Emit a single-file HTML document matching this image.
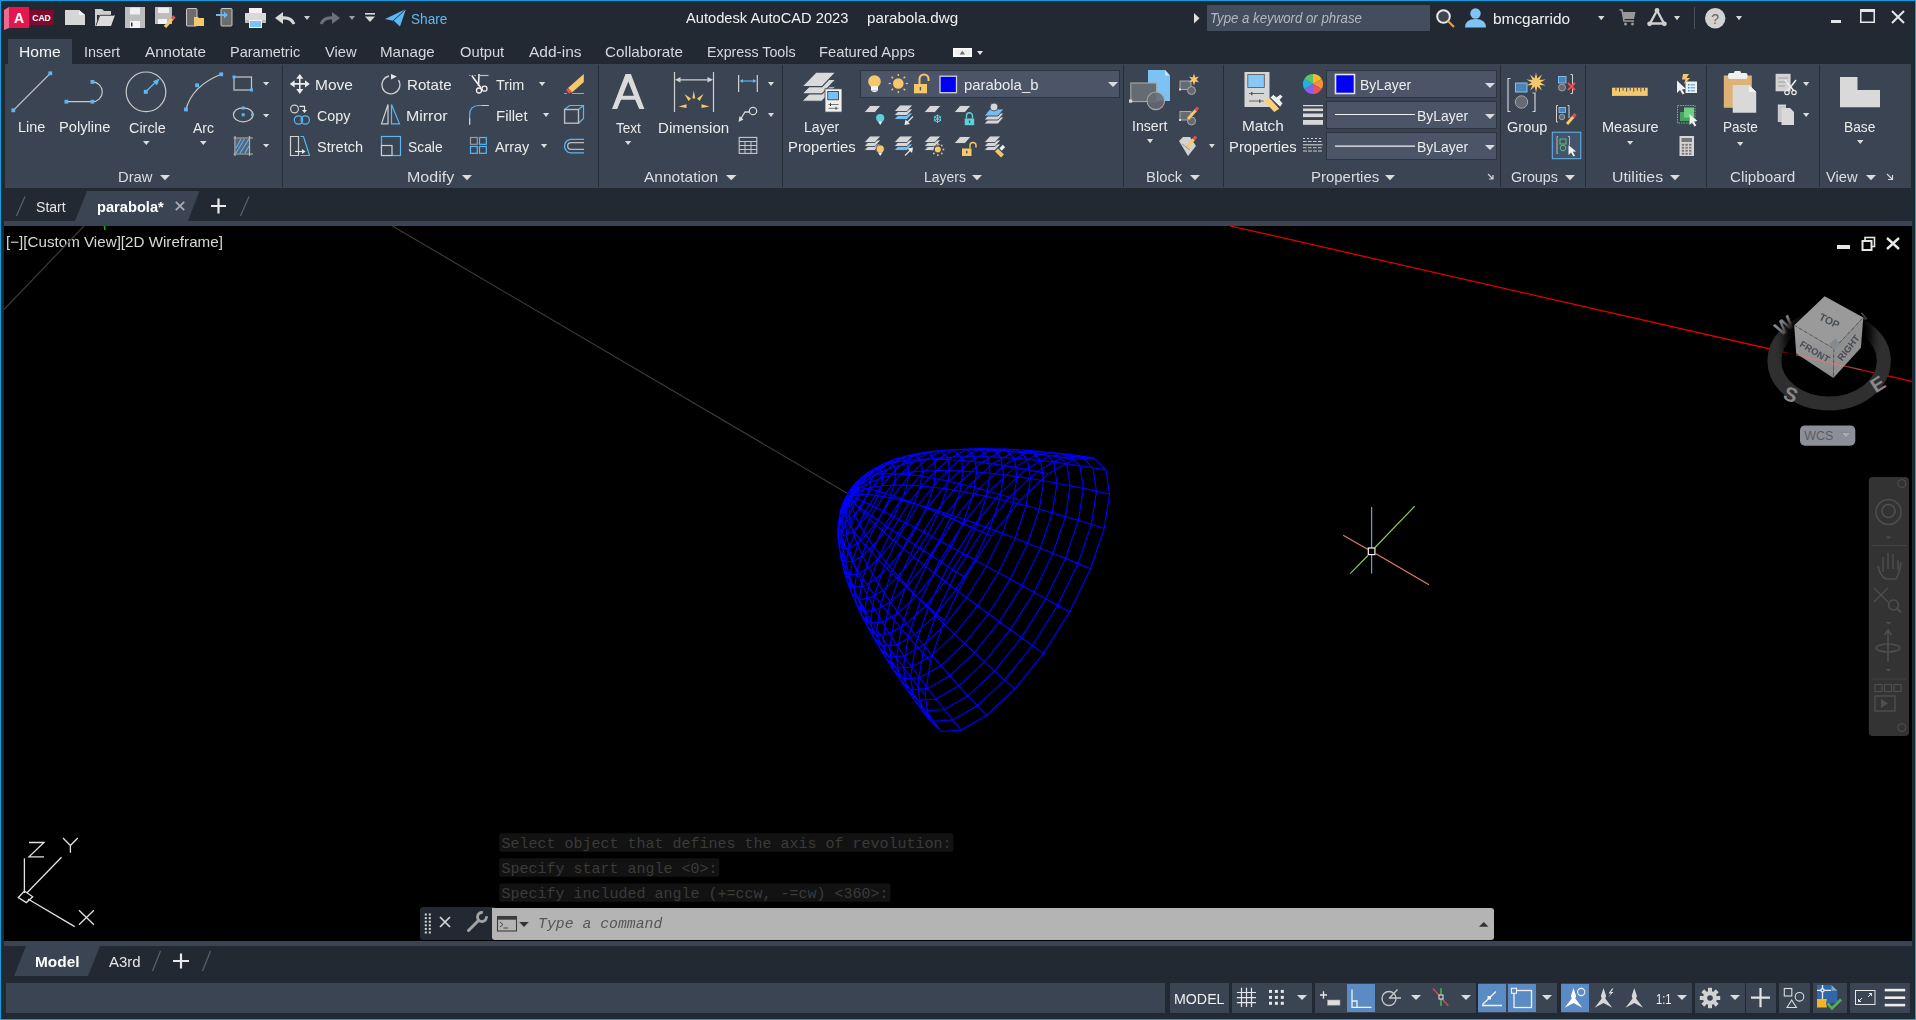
<!DOCTYPE html><html><head><meta charset="utf-8"><style>
html,body{margin:0;padding:0;width:1916px;height:1020px;overflow:hidden;background:#222933;font-family:"Liberation Sans", sans-serif;}
svg{overflow:visible}
</style></head><body>
<div style="position:absolute;left:0px;top:0px;width:1916px;height:1px;background:#0e9fe3;"></div>
<div style="position:absolute;left:0px;top:1019px;width:1916px;height:1px;background:#0e9fe3;"></div>
<div style="position:absolute;left:0px;top:0px;width:1px;height:1020px;background:#0e9fe3;"></div>
<div style="position:absolute;left:1915px;top:0px;width:1px;height:1020px;background:#0e9fe3;"></div>
<div style="position:absolute;left:8px;top:39px;width:64px;height:25px;background:#3b4453;"></div>
<div style="position:absolute;left:5px;top:64px;width:1906px;height:124px;background:#3b4453;"></div>
<div style="position:absolute;left:282px;top:65px;width:1px;height:122px;background:#262c36;"></div>
<div style="position:absolute;left:598px;top:65px;width:1px;height:122px;background:#262c36;"></div>
<div style="position:absolute;left:782px;top:65px;width:1px;height:122px;background:#262c36;"></div>
<div style="position:absolute;left:1123px;top:65px;width:1px;height:122px;background:#262c36;"></div>
<div style="position:absolute;left:1223px;top:65px;width:1px;height:122px;background:#262c36;"></div>
<div style="position:absolute;left:1500px;top:65px;width:1px;height:122px;background:#262c36;"></div>
<div style="position:absolute;left:1585px;top:65px;width:1px;height:122px;background:#262c36;"></div>
<div style="position:absolute;left:1706px;top:65px;width:1px;height:122px;background:#262c36;"></div>
<div style="position:absolute;left:1819px;top:65px;width:1px;height:122px;background:#262c36;"></div>
<svg style="position:absolute;left:70px;top:190px;" width="135" height="32" viewBox="0 0 135 32"><polygon points="17,1 129.5,1 118,31 5,31" fill="#3b4453"/></svg>
<div style="position:absolute;left:4px;top:221px;width:1908px;height:5px;background:#3b4453;"></div>
<div style="position:absolute;left:4px;top:226px;width:1908px;height:715px;background:#000;"></div>
<div style="position:absolute;left:4px;top:941px;width:1908px;height:5px;background:#3b4453;"></div>
<svg style="position:absolute;left:10px;top:946px;" width="95" height="30" viewBox="0 0 95 30"><polygon points="16,0 90,0 78,30 4,30" fill="#3b4453"/></svg>
<div style="position:absolute;left:6px;top:983px;width:1159px;height:30px;background:#3b4453;"></div>
<div style="position:absolute;left:1170px;top:983px;width:59px;height:30px;background:#3b4453;"></div>
<div style="position:absolute;left:1232px;top:983px;width:80px;height:30px;background:#3b4453;"></div>
<div style="position:absolute;left:1315px;top:983px;width:161px;height:30px;background:#3b4453;"></div>
<div style="position:absolute;left:1478px;top:983px;width:79px;height:30px;background:#3b4453;"></div>
<div style="position:absolute;left:1561px;top:983px;width:131px;height:30px;background:#3b4453;"></div>
<div style="position:absolute;left:1695px;top:983px;width:50px;height:30px;background:#3b4453;"></div>
<div style="position:absolute;left:1746px;top:983px;width:30px;height:30px;background:#3b4453;"></div>
<div style="position:absolute;left:1779px;top:983px;width:31px;height:30px;background:#3b4453;"></div>
<div style="position:absolute;left:1813px;top:983px;width:34px;height:30px;background:#3b4453;"></div>
<div style="position:absolute;left:1850px;top:983px;width:60px;height:30px;background:#3b4453;"></div>
<div style="position:absolute;left:1347px;top:984px;width:28px;height:28px;background:#5b8bc4;"></div>
<div style="position:absolute;left:1478px;top:984px;width:28px;height:28px;background:#5b8bc4;"></div>
<div style="position:absolute;left:1508px;top:984px;width:28px;height:28px;background:#5b8bc4;"></div>
<div style="position:absolute;left:1561px;top:984px;width:28px;height:28px;background:#5b8bc4;"></div>
<div style="position:absolute;left:686.40px;top:9.80px;font:normal normal 15px/15px 'Liberation Sans', sans-serif;color:#f2f2f2;white-space:pre;transform:scaleX(0.9788);transform-origin:0 0;">Autodesk AutoCAD 2023</div>
<div style="position:absolute;left:866.50px;top:9.80px;font:normal normal 15px/15px 'Liberation Sans', sans-serif;color:#f2f2f2;white-space:pre;transform:scaleX(1.0120);transform-origin:0 0;">parabola.dwg</div>
<div style="position:absolute;left:411.00px;top:11.00px;font:normal normal 15px/15px 'Liberation Sans', sans-serif;color:#62b9f0;white-space:pre;transform:scaleX(0.9072);transform-origin:0 0;">Share</div>
<div style="position:absolute;left:1207px;top:5px;width:223px;height:26px;background:#444d5d;"></div>
<div style="position:absolute;left:1209.56px;top:11.05px;font:italic normal 14px/14px 'Liberation Sans', sans-serif;color:#b4b8bf;white-space:pre;transform:scaleX(0.9442);transform-origin:0 0;">Type a keyword or phrase</div>
<div style="position:absolute;left:1492.80px;top:11.30px;font:normal normal 15px/15px 'Liberation Sans', sans-serif;color:#f2f2f2;white-space:pre;transform:scaleX(1.0270);transform-origin:0 0;">bmcgarrido</div>
<div style="position:absolute;left:18.56px;top:44.10px;font:normal normal 15px/15px 'Liberation Sans', sans-serif;color:#f6f6f6;white-space:pre;transform:scaleX(1.0447);transform-origin:0 0;">Home</div>
<div style="position:absolute;left:84.24px;top:44.10px;font:normal normal 15px/15px 'Liberation Sans', sans-serif;color:#d6d8dc;white-space:pre;transform:scaleX(0.9586);transform-origin:0 0;">Insert</div>
<div style="position:absolute;left:145.40px;top:44.10px;font:normal normal 15px/15px 'Liberation Sans', sans-serif;color:#d6d8dc;white-space:pre;transform:scaleX(1.0149);transform-origin:0 0;">Annotate</div>
<div style="position:absolute;left:230.03px;top:44.10px;font:normal normal 15px/15px 'Liberation Sans', sans-serif;color:#d6d8dc;white-space:pre;transform:scaleX(0.9678);transform-origin:0 0;">Parametric</div>
<div style="position:absolute;left:325.30px;top:44.10px;font:normal normal 15px/15px 'Liberation Sans', sans-serif;color:#d6d8dc;white-space:pre;transform:scaleX(0.9812);transform-origin:0 0;">View</div>
<div style="position:absolute;left:380.39px;top:44.10px;font:normal normal 15px/15px 'Liberation Sans', sans-serif;color:#d6d8dc;white-space:pre;transform:scaleX(1.0101);transform-origin:0 0;">Manage</div>
<div style="position:absolute;left:460.00px;top:44.10px;font:normal normal 15px/15px 'Liberation Sans', sans-serif;color:#d6d8dc;white-space:pre;transform:scaleX(0.9812);transform-origin:0 0;">Output</div>
<div style="position:absolute;left:528.90px;top:44.10px;font:normal normal 15px/15px 'Liberation Sans', sans-serif;color:#d6d8dc;white-space:pre;transform:scaleX(1.0346);transform-origin:0 0;">Add-ins</div>
<div style="position:absolute;left:604.90px;top:44.10px;font:normal normal 15px/15px 'Liberation Sans', sans-serif;color:#d6d8dc;white-space:pre;transform:scaleX(1.0174);transform-origin:0 0;">Collaborate</div>
<div style="position:absolute;left:706.65px;top:44.10px;font:normal normal 15px/15px 'Liberation Sans', sans-serif;color:#d6d8dc;white-space:pre;transform:scaleX(0.9514);transform-origin:0 0;">Express Tools</div>
<div style="position:absolute;left:818.62px;top:44.10px;font:normal normal 15px/15px 'Liberation Sans', sans-serif;color:#d6d8dc;white-space:pre;transform:scaleX(0.9836);transform-origin:0 0;">Featured Apps</div>
<div style="position:absolute;left:17.84px;top:119.30px;font:normal normal 15px/15px 'Liberation Sans', sans-serif;color:#ececec;white-space:pre;transform:scaleX(0.9624);transform-origin:0 0;">Line</div>
<div style="position:absolute;left:58.62px;top:119.30px;font:normal normal 15px/15px 'Liberation Sans', sans-serif;color:#ececec;white-space:pre;transform:scaleX(0.9788);transform-origin:0 0;">Polyline</div>
<div style="position:absolute;left:128.50px;top:119.60px;font:normal normal 15px/15px 'Liberation Sans', sans-serif;color:#ececec;white-space:pre;transform:scaleX(0.9607);transform-origin:0 0;">Circle</div>
<div style="position:absolute;left:192.50px;top:119.60px;font:normal normal 15px/15px 'Liberation Sans', sans-serif;color:#ececec;white-space:pre;transform:scaleX(0.9348);transform-origin:0 0;">Arc</div>
<div style="position:absolute;left:315.37px;top:77.00px;font:normal normal 15px/15px 'Liberation Sans', sans-serif;color:#ececec;white-space:pre;transform:scaleX(1.0329);transform-origin:0 0;">Move</div>
<div style="position:absolute;left:407.49px;top:77.00px;font:normal normal 15px/15px 'Liberation Sans', sans-serif;color:#ececec;white-space:pre;transform:scaleX(1.0081);transform-origin:0 0;">Rotate</div>
<div style="position:absolute;left:495.60px;top:77.00px;font:normal normal 15px/15px 'Liberation Sans', sans-serif;color:#ececec;white-space:pre;transform:scaleX(0.9608);transform-origin:0 0;">Trim</div>
<div style="position:absolute;left:317.00px;top:107.80px;font:normal normal 15px/15px 'Liberation Sans', sans-serif;color:#ececec;white-space:pre;transform:scaleX(0.9573);transform-origin:0 0;">Copy</div>
<div style="position:absolute;left:406.44px;top:107.80px;font:normal normal 15px/15px 'Liberation Sans', sans-serif;color:#ececec;white-space:pre;transform:scaleX(1.0613);transform-origin:0 0;">Mirror</div>
<div style="position:absolute;left:495.60px;top:107.80px;font:normal normal 15px/15px 'Liberation Sans', sans-serif;color:#ececec;white-space:pre;transform:scaleX(0.9967);transform-origin:0 0;">Fillet</div>
<div style="position:absolute;left:317.30px;top:139.00px;font:normal normal 15px/15px 'Liberation Sans', sans-serif;color:#ececec;white-space:pre;transform:scaleX(0.9687);transform-origin:0 0;">Stretch</div>
<div style="position:absolute;left:407.50px;top:139.00px;font:normal normal 15px/15px 'Liberation Sans', sans-serif;color:#ececec;white-space:pre;transform:scaleX(0.9225);transform-origin:0 0;">Scale</div>
<div style="position:absolute;left:495.30px;top:139.00px;font:normal normal 15px/15px 'Liberation Sans', sans-serif;color:#ececec;white-space:pre;transform:scaleX(0.9549);transform-origin:0 0;">Array</div>
<div style="position:absolute;left:616.40px;top:119.60px;font:normal normal 15px/15px 'Liberation Sans', sans-serif;color:#ececec;white-space:pre;transform:scaleX(0.9032);transform-origin:0 0;">Text</div>
<div style="position:absolute;left:658.00px;top:119.60px;font:normal normal 15px/15px 'Liberation Sans', sans-serif;color:#ececec;white-space:pre;transform:scaleX(1.0040);transform-origin:0 0;">Dimension</div>
<div style="position:absolute;left:803.76px;top:119.00px;font:normal normal 15px/15px 'Liberation Sans', sans-serif;color:#ececec;white-space:pre;transform:scaleX(0.9390);transform-origin:0 0;">Layer</div>
<div style="position:absolute;left:787.61px;top:139.00px;font:normal normal 15px/15px 'Liberation Sans', sans-serif;color:#ececec;white-space:pre;transform:scaleX(0.9886);transform-origin:0 0;">Properties</div>
<div style="position:absolute;left:1131.76px;top:118.30px;font:normal normal 15px/15px 'Liberation Sans', sans-serif;color:#ececec;white-space:pre;transform:scaleX(0.9425);transform-origin:0 0;">Insert</div>
<div style="position:absolute;left:1241.58px;top:118.00px;font:normal normal 15px/15px 'Liberation Sans', sans-serif;color:#ececec;white-space:pre;transform:scaleX(1.0227);transform-origin:0 0;">Match</div>
<div style="position:absolute;left:1228.71px;top:139.00px;font:normal normal 15px/15px 'Liberation Sans', sans-serif;color:#ececec;white-space:pre;transform:scaleX(0.9886);transform-origin:0 0;">Properties</div>
<div style="position:absolute;left:1506.50px;top:118.50px;font:normal normal 15px/15px 'Liberation Sans', sans-serif;color:#ececec;white-space:pre;transform:scaleX(0.9698);transform-origin:0 0;">Group</div>
<div style="position:absolute;left:1601.53px;top:119.00px;font:normal normal 15px/15px 'Liberation Sans', sans-serif;color:#ececec;white-space:pre;transform:scaleX(0.9699);transform-origin:0 0;">Measure</div>
<div style="position:absolute;left:1722.59px;top:119.00px;font:normal normal 15px/15px 'Liberation Sans', sans-serif;color:#ececec;white-space:pre;transform:scaleX(0.9050);transform-origin:0 0;">Paste</div>
<div style="position:absolute;left:1843.78px;top:119.00px;font:normal normal 15px/15px 'Liberation Sans', sans-serif;color:#ececec;white-space:pre;transform:scaleX(0.9164);transform-origin:0 0;">Base</div>
<div style="position:absolute;left:117.91px;top:169.00px;font:normal normal 15px/15px 'Liberation Sans', sans-serif;color:#dcdde0;white-space:pre;transform:scaleX(0.9862);transform-origin:0 0;">Draw</div>
<div style="position:absolute;left:407.43px;top:169.00px;font:normal normal 15px/15px 'Liberation Sans', sans-serif;color:#dcdde0;white-space:pre;transform:scaleX(1.0691);transform-origin:0 0;">Modify</div>
<div style="position:absolute;left:644.20px;top:169.00px;font:normal normal 15px/15px 'Liberation Sans', sans-serif;color:#dcdde0;white-space:pre;transform:scaleX(1.0338);transform-origin:0 0;">Annotation</div>
<div style="position:absolute;left:923.57px;top:169.00px;font:normal normal 15px/15px 'Liberation Sans', sans-serif;color:#dcdde0;white-space:pre;transform:scaleX(0.9306);transform-origin:0 0;">Layers</div>
<div style="position:absolute;left:1145.91px;top:169.00px;font:normal normal 15px/15px 'Liberation Sans', sans-serif;color:#dcdde0;white-space:pre;transform:scaleX(0.9895);transform-origin:0 0;">Block</div>
<div style="position:absolute;left:1310.60px;top:169.00px;font:normal normal 15px/15px 'Liberation Sans', sans-serif;color:#dcdde0;white-space:pre;transform:scaleX(0.9975);transform-origin:0 0;">Properties</div>
<div style="position:absolute;left:1511.40px;top:169.00px;font:normal normal 15px/15px 'Liberation Sans', sans-serif;color:#dcdde0;white-space:pre;transform:scaleX(0.9530);transform-origin:0 0;">Groups</div>
<div style="position:absolute;left:1611.64px;top:169.00px;font:normal normal 15px/15px 'Liberation Sans', sans-serif;color:#dcdde0;white-space:pre;transform:scaleX(1.0568);transform-origin:0 0;">Utilities</div>
<div style="position:absolute;left:1730.30px;top:169.00px;font:normal normal 15px/15px 'Liberation Sans', sans-serif;color:#dcdde0;white-space:pre;transform:scaleX(1.0178);transform-origin:0 0;">Clipboard</div>
<div style="position:absolute;left:1826.00px;top:169.00px;font:normal normal 15px/15px 'Liberation Sans', sans-serif;color:#dcdde0;white-space:pre;transform:scaleX(0.9812);transform-origin:0 0;">View</div>
<div style="position:absolute;left:35.50px;top:198.80px;font:normal normal 15px/15px 'Liberation Sans', sans-serif;color:#e6e6e6;white-space:pre;transform:scaleX(0.9382);transform-origin:0 0;">Start</div>
<div style="position:absolute;left:96.60px;top:199.00px;font:normal bold 15px/15px 'Liberation Sans', sans-serif;color:#ffffff;white-space:pre;transform:scaleX(0.9764);transform-origin:0 0;">parabola*</div>
<div style="position:absolute;left:6.49px;top:234.10px;font:normal normal 15px/15px 'Liberation Sans', sans-serif;color:#d8d8d8;white-space:pre;transform:scaleX(1.0117);transform-origin:0 0;">[&#8722;][Custom View][2D Wireframe]</div>
<div style="position:absolute;left:34.67px;top:954.00px;font:normal bold 15px/15px 'Liberation Sans', sans-serif;color:#ffffff;white-space:pre;transform:scaleX(1.0270);transform-origin:0 0;">Model</div>
<div style="position:absolute;left:109.00px;top:954.00px;font:normal normal 15px/15px 'Liberation Sans', sans-serif;color:#e6e6e6;white-space:pre;transform:scaleX(0.9987);transform-origin:0 0;">A3rd</div>
<div style="position:absolute;left:1173.69px;top:991.65px;font:normal normal 14px/14px 'Liberation Sans', sans-serif;color:#f0f0f0;white-space:pre;transform:scaleX(1.0143);transform-origin:0 0;">MODEL</div>
<div style="position:absolute;left:1655.60px;top:991.65px;font:normal normal 14px/14px 'Liberation Sans', sans-serif;color:#f0f0f0;white-space:pre;transform:scaleX(0.7978);transform-origin:0 0;">1:1</div>
<svg style="position:absolute;left:4px;top:7px;" width="51" height="24" viewBox="0 0 51 24"><polygon points="0,3 5,0 5,21 0,23" fill="#ea6a90"/><rect x="5" y="0" width="20" height="21" fill="#e3164f"/><rect x="25" y="3" width="25" height="15" fill="#7d0b2c"/><text x="15" y="16" font-family="Liberation Sans" font-weight="bold" font-size="14" fill="#fff" text-anchor="middle">A</text><text x="37.5" y="13.8" font-family="Liberation Sans" font-weight="bold" font-size="8.5" fill="#fff" text-anchor="middle">CAD</text></svg>
<svg style="position:absolute;left:65px;top:10px;" width="20" height="15" viewBox="0 0 20 15"><polygon points="0,0 14,0 20,5 20,15 0,15" fill="#d6d6d6"/><polygon points="14,0 20,5 14,5" fill="#f4f4f4"/></svg>
<svg style="position:absolute;left:95px;top:9px;" width="20" height="17" viewBox="0 0 20 17"><polygon points="0,0 7,0 9,2 16,2 16,6 0,6" fill="#cfcfcf"/><rect x="0" y="0" width="2" height="17" fill="#cfcfcf"/><polygon points="0.5,17 4.5,6 20,6 16,17" fill="#dcdcdc"/><path d="M1 16.5 L4.8 6.3 L19.5 6.3" stroke="#2a3038" stroke-width="0.9" fill="none"/></svg>
<svg style="position:absolute;left:125px;top:7px;" width="20" height="21" viewBox="0 0 20 21"><rect x="0" y="0" width="20" height="21" fill="#bdbdbd"/><rect x="5" y="0.5" width="10" height="7" fill="#f0f0f0"/><rect x="5" y="14" width="10" height="7" fill="#f4f4f4"/><rect x="6" y="15.5" width="1.5" height="4" fill="#333"/></svg>
<svg style="position:absolute;left:155px;top:7px;" width="20" height="21" viewBox="0 0 20 21"><rect x="0" y="0" width="17" height="17" fill="#bdbdbd"/><rect x="3" y="0.5" width="11" height="5.5" fill="#f0f0f0"/><rect x="3" y="12" width="9" height="5" fill="#f4f4f4"/><path d="M10 20 L18 11" stroke="#f6c86c" stroke-width="3.2" stroke-linecap="butt"/><path d="M17 12 L19.5 9.5" stroke="#e85555" stroke-width="3.2"/></svg>
<svg style="position:absolute;left:186px;top:8px;" width="19" height="19" viewBox="0 0 19 19"><rect x="0.5" y="0.5" width="10.5" height="17.5" rx="1" fill="#6c6c6c" stroke="#c8c8c8" stroke-width="1"/><polygon points="8,9 12,9 13,10 18,10 18,18 8,18" fill="#f6c86c"/></svg>
<svg style="position:absolute;left:216px;top:8px;" width="17" height="19" viewBox="0 0 17 19"><rect x="5" y="0.5" width="11" height="17.5" rx="1" fill="#6c6c6c" stroke="#c8c8c8" stroke-width="1"/><path d="M0 7 L9 7" stroke="#6ab8f2" stroke-width="2"/><polygon points="8,3.5 12,7 8,10.5" fill="#6ab8f2"/></svg>
<svg style="position:absolute;left:245px;top:8px;" width="21" height="20" viewBox="0 0 21 20"><rect x="4" y="0" width="13" height="6" fill="#f2f2f2"/><rect x="0" y="5" width="21" height="10" fill="#d9d9d9"/><rect x="0" y="12" width="21" height="3" fill="#bcbcbc"/><rect x="4" y="12" width="13" height="8" fill="#f2f2f2"/><rect x="5" y="13" width="11" height="6" fill="#7cc2f5"/></svg>
<svg style="position:absolute;left:275px;top:12px;" width="20" height="13" viewBox="0 0 20 13"><path d="M7 6 Q16 5 19 12" stroke="#d8d8d8" stroke-width="3" fill="none"/><polygon points="0,6 8,0 8,12" fill="#d8d8d8"/></svg>
<svg style="position:absolute;left:304px;top:16px;" width="6" height="4" viewBox="0 0 6 4"><polygon points="0,0 6,0 3.0,4" fill="#cfcfcf"/></svg>
<svg style="position:absolute;left:320px;top:12px;" width="20" height="13" viewBox="0 0 20 13"><path d="M13 6 Q4 5 1 12" stroke="#6b7079" stroke-width="3" fill="none"/><polygon points="20,6 12,0 12,12" fill="#6b7079"/></svg>
<svg style="position:absolute;left:348.5px;top:16px;" width="6" height="4" viewBox="0 0 6 4"><polygon points="0,0 6,0 3.0,4" fill="#9a9da3"/></svg>
<svg style="position:absolute;left:365px;top:13px;" width="10" height="9" viewBox="0 0 10 9"><rect x="0" y="0" width="10" height="1.6" fill="#d8d8d8"/><polygon points="0,3.5 10,3.5 5,9" fill="#d8d8d8"/></svg>
<svg style="position:absolute;left:385px;top:8.5px;" width="21" height="18" viewBox="0 0 21 18"><polygon points="0,10 21,0 15,17.5 9,12" fill="#5bb8f0"/><path d="M21 0 L8 12 L9.5 17" stroke="#2a3340" stroke-width="1" fill="none"/></svg>
<svg style="position:absolute;left:1194px;top:13px;" width="6" height="11" viewBox="0 0 6 11"><polygon points="0,0 5.5,5.2 0,10.5" fill="#e0e0e0"/></svg>
<svg style="position:absolute;left:1436px;top:9px;" width="19" height="19" viewBox="0 0 19 19"><circle cx="7.5" cy="7.5" r="6.3" fill="#3e4652" stroke="#e8e8e8" stroke-width="2"/><path d="M12 12 L18 18" stroke="#e39b4a" stroke-width="2.2"/></svg>
<svg style="position:absolute;left:1465px;top:8px;" width="21" height="20" viewBox="0 0 21 20"><circle cx="10.5" cy="5.5" r="5.2" fill="#7ec4f5"/><path d="M0 19.5 Q0 11 10.5 11 Q21 11 21 19.5 Z" fill="#7ec4f5"/></svg>
<svg style="position:absolute;left:1598px;top:15.7px;" width="6.5" height="4.3" viewBox="0 0 6.5 4.3"><polygon points="0,0 6.5,0 3.25,4.3" fill="#d8d8d8"/></svg>
<svg style="position:absolute;left:1619px;top:9px;" width="17" height="17" viewBox="0 0 17 17"><path d="M0.5 1 L3 1 L5 12 L15 12" stroke="#999" stroke-width="1.6" fill="none"/><polygon points="3.5,3 16.5,3 15,10 5,10" fill="#999"/><circle cx="6.5" cy="15" r="1.5" fill="#999"/><circle cx="13.5" cy="15" r="1.5" fill="#999"/></svg>
<svg style="position:absolute;left:1647px;top:8px;" width="20" height="19" viewBox="0 0 20 19"><path d="M10 2.5 L3 15.5 L17 15.5 Z" stroke="#cfcfcf" stroke-width="2.4" fill="none" stroke-linejoin="round"/><circle cx="10" cy="2.5" r="2.4" fill="#cfcfcf"/><circle cx="2.6" cy="15.8" r="2.4" fill="#cfcfcf"/><circle cx="17.4" cy="15.8" r="2.4" fill="#cfcfcf"/></svg>
<svg style="position:absolute;left:1674.4px;top:15.7px;" width="6" height="4.3" viewBox="0 0 6 4.3"><polygon points="0,0 6,0 3.0,4.3" fill="#d8d8d8"/></svg>
<div style="position:absolute;left:1694px;top:7px;width:1px;height:22px;background:#485160;"></div>
<svg style="position:absolute;left:1705px;top:8px;" width="21" height="21" viewBox="0 0 21 21"><circle cx="10.2" cy="10.2" r="10.2" fill="#d2d2d2"/><text x="10.2" y="15.5" font-family="Liberation Sans" font-size="14" fill="#666" text-anchor="middle">?</text></svg>
<svg style="position:absolute;left:1735.5px;top:15.7px;" width="6" height="4.3" viewBox="0 0 6 4.3"><polygon points="0,0 6,0 3.0,4.3" fill="#d8d8d8"/></svg>
<div style="position:absolute;left:1831px;top:20px;width:10px;height:3px;background:#e6e6e6;"></div>
<svg style="position:absolute;left:1860px;top:9px;" width="15" height="14" viewBox="0 0 15 14"><rect x="0.75" y="0.75" width="13.5" height="12.5" fill="none" stroke="#e6e6e6" stroke-width="1.5"/><rect x="0" y="0" width="15" height="3" fill="#e6e6e6"/></svg>
<svg style="position:absolute;left:1891px;top:10px;" width="14" height="14" viewBox="0 0 14 14"><path d="M1 1 L13 13 M13 1 L1 13" stroke="#e6e6e6" stroke-width="2"/></svg>
<svg style="position:absolute;left:953px;top:48px;" width="19" height="9" viewBox="0 0 19 9"><rect width="19" height="9" fill="#fdfdfd"/><rect x="1.5" y="1.5" width="16" height="6" fill="#efefef"/><polygon points="6.7,6.6 12,6.6 9.35,2.8" fill="#6a6a6a"/></svg>
<svg style="position:absolute;left:977px;top:51px;" width="6" height="4" viewBox="0 0 6 4"><polygon points="0,0 6,0 3.0,4" fill="#e6e6e6"/></svg>
<svg style="position:absolute;left:14px;top:195px;" width="14" height="22" viewBox="0 0 14 22"><path d="M2.5 21 L11 1.5" stroke="#5a6270" stroke-width="1.2"/></svg>
<svg style="position:absolute;left:238px;top:195px;" width="14" height="22" viewBox="0 0 14 22"><path d="M2.5 21 L11 1.5" stroke="#5a6270" stroke-width="1.2"/></svg>
<svg style="position:absolute;left:175px;top:201px;" width="10" height="10" viewBox="0 0 10 10"><path d="M0.8 0.8 L9.2 9.2 M9.2 0.8 L0.8 9.2" stroke="#a9adb4" stroke-width="1.8"/></svg>
<svg style="position:absolute;left:211px;top:198px;" width="16" height="16" viewBox="0 0 16 16"><path d="M0 8 L15 8 M7.5 0.5 L7.5 15.5" stroke="#eaeaea" stroke-width="2.2"/></svg>
<svg style="position:absolute;left:150px;top:950px;" width="14" height="22" viewBox="0 0 14 22"><path d="M2.5 21 L10.5 1" stroke="#5a6270" stroke-width="1.2"/></svg>
<svg style="position:absolute;left:200px;top:950px;" width="14" height="22" viewBox="0 0 14 22"><path d="M2.5 21 L10.5 1" stroke="#5a6270" stroke-width="1.2"/></svg>
<svg style="position:absolute;left:173px;top:953px;" width="16" height="16" viewBox="0 0 16 16"><path d="M0 8 L16 8 M8 0.5 L8 15.5" stroke="#eaeaea" stroke-width="2.2"/></svg>
<svg style="position:absolute;left:0px;top:64px;" width="300" height="124" viewBox="0 0 300 124"><path d="M13.3 46.3 L50.3 9.3" stroke="#c8c8c8" stroke-width="1.2"/><rect x="11.40" y="44.40" width="3.8" height="3.8" fill="#5cb6f2"/><rect x="48.40" y="7.40" width="3.8" height="3.8" fill="#5cb6f2"/><path d="M66.4 37.7 L92.4 37.7 M92.4 17.9 A9.9 9.9 0 0 1 92.4 37.7" stroke="#c8c8c8" stroke-width="1.2" fill="none"/><rect x="64.50" y="35.80" width="3.8" height="3.8" fill="#5cb6f2"/><rect x="90.50" y="35.80" width="3.8" height="3.8" fill="#5cb6f2"/><rect x="90.50" y="16.00" width="3.8" height="3.8" fill="#5cb6f2"/><circle cx="146" cy="27.8" r="19.8" stroke="#c8c8c8" stroke-width="1.2" fill="none"/><path d="M145.8 27.8 L157.5 16.3" stroke="#5cb6f2" stroke-width="1.3"/><polygon points="159.6,14.6 152.8,17.2 157,21.4" fill="#5cb6f2"/><rect x="143.80" y="25.80" width="4" height="4" fill="#5cb6f2"/><path d="M186 45.5 Q192 22 221.2 10.3" stroke="#c8c8c8" stroke-width="1.2" fill="none"/><rect x="184.10" y="43.60" width="3.8" height="3.8" fill="#5cb6f2"/><rect x="195.20" y="19.40" width="3.8" height="3.8" fill="#5cb6f2"/><rect x="219.30" y="8.40" width="3.8" height="3.8" fill="#5cb6f2"/><rect x="234" y="13" width="17.5" height="13" stroke="#c8c8c8" stroke-width="1.2" fill="none"/><rect x="232.50" y="11.50" width="3" height="3" fill="#5cb6f2"/><rect x="250.00" y="24.50" width="3" height="3" fill="#5cb6f2"/><ellipse cx="243.2" cy="50.8" rx="9.8" ry="7" stroke="#c8c8c8" stroke-width="1.2" fill="none"/><rect x="241.70" y="49.30" width="3" height="3" fill="#5cb6f2"/><rect x="241.70" y="42.50" width="3" height="3" fill="#5cb6f2"/><rect x="251.00" y="49.30" width="3" height="3" fill="#5cb6f2"/><path d="M235 72 L235 92 M249.5 72 L249.5 92 M233.5 74 L253 74 M233.5 90 L253 90" stroke="#b8b8b8" stroke-width="1.2"/><rect x="236" y="75" width="13" height="14" fill="#5a6472"/><path d="M236 84 L241 75 M236 89 L244.5 75 M240 89 L249 75 M245 89 L249 82" stroke="#5cb6f2" stroke-width="1.1"/></svg>
<svg style="position:absolute;left:263.2px;top:82.3px;" width="6.2" height="3.6" viewBox="0 0 6.2 3.6"><polygon points="0,0 6.2,0 3.1,3.6" fill="#dcdcdc"/></svg>
<svg style="position:absolute;left:263.2px;top:113.5px;" width="6.2" height="3.6" viewBox="0 0 6.2 3.6"><polygon points="0,0 6.2,0 3.1,3.6" fill="#dcdcdc"/></svg>
<svg style="position:absolute;left:263.2px;top:144.3px;" width="6.2" height="3.6" viewBox="0 0 6.2 3.6"><polygon points="0,0 6.2,0 3.1,3.6" fill="#dcdcdc"/></svg>
<svg style="position:absolute;left:142.7px;top:141px;" width="6.6" height="4" viewBox="0 0 6.6 4"><polygon points="0,0 6.6,0 3.3,4" fill="#dcdcdc"/></svg>
<svg style="position:absolute;left:200.0px;top:141px;" width="6.6" height="4" viewBox="0 0 6.6 4"><polygon points="0,0 6.6,0 3.3,4" fill="#dcdcdc"/></svg>
<svg style="position:absolute;left:160px;top:175px;" width="10" height="5.2" viewBox="0 0 10 5.2"><polygon points="0,0 10,0 5.0,5.2" fill="#dcdcdc"/></svg>
<svg style="position:absolute;left:0px;top:0px;" width="600" height="190" viewBox="0 0 600 190"><path d="M293.8 83.9 L305.8 83.9 M299.8 77.9 L299.8 89.9" stroke="#ececec" stroke-width="1.6"/><polygon points="289.8,83.9 294.6,80.30000000000001 294.6,87.5" fill="#ececec"/><polygon points="309.8,83.9 305.0,80.30000000000001 305.0,87.5" fill="#ececec"/><polygon points="299.8,73.9 296.2,78.7 303.40000000000003,78.7" fill="#ececec"/><polygon points="299.8,93.9 296.2,89.10000000000001 303.40000000000003,89.10000000000001" fill="#ececec"/><path d="M389 76 A9 9 0 1 0 398.5 80" stroke="#d0d0d0" stroke-width="1.3" fill="none"/><polygon points="391,74 396.8,76.6 391,79.5" fill="#e8e8e8"/><circle cx="294.5" cy="109" r="3.9" stroke="#d0d0d0" stroke-width="1.2" fill="none"/><path d="M299.5 106.3 L304.5 106.3 L304.5 111" stroke="#e8e8e8" stroke-width="1.2" fill="none"/><polygon points="302,110 307,110 304.5,113" fill="#e8e8e8"/><circle cx="298.5" cy="120" r="4.2" stroke="#5cb6f2" stroke-width="1.2" fill="none"/><circle cx="305.2" cy="120" r="4.2" stroke="#5cb6f2" stroke-width="1.2" fill="none"/><path d="M388 104.5 L388 123.8 L381.5 123.8 Z" stroke="#d0d0d0" stroke-width="1.2" fill="none"/><path d="M391.5 104.5 L391.5 123.8 L399.5 123.8 Z" stroke="#5cb6f2" stroke-width="1.2" fill="none"/><path d="M290.5 136.5 L298.5 136.5 L298.5 155.5 L290.5 155.5 Z" stroke="#d0d0d0" stroke-width="1.2" fill="none"/><path d="M300.5 136.5 L303.5 136.5 L309.5 155.5 L300.5 155.5" stroke="#5cb6f2" stroke-width="1.2" fill="none"/><path d="M295 151.5 L303 151.5" stroke="#e8e8e8" stroke-width="1.2"/><polygon points="302,149 305.5,151.5 302,154" fill="#e8e8e8"/><rect x="381.5" y="136.5" width="19" height="19" stroke="#5cb6f2" stroke-width="1.2" fill="none"/><rect x="381.5" y="145.5" width="10.5" height="10" stroke="#d0d0d0" stroke-width="1.2" fill="#3b4453"/><path d="M469 75.5 L476 75.5" stroke="#5cb6f2" stroke-width="1.2" stroke-dasharray="1.6 1"/><path d="M480 75.5 L488.5 75.5" stroke="#c0c0c0" stroke-width="1.2"/><path d="M472 76 L481 88 M479 74 L478.5 86" stroke="#f0f0f0" stroke-width="1.6"/><circle cx="479" cy="90.5" r="2.5" stroke="#f0f0f0" stroke-width="1.3" fill="none"/><circle cx="484.5" cy="88.7" r="2.5" stroke="#f0f0f0" stroke-width="1.3" fill="none"/><polygon points="568,88 583.8,74 583.8,82 572,92.5" fill="#f6c86c"/><polygon points="568,88 572,92.5 569,93.5 566,90" fill="#e85050"/><path d="M564 93.5 L567 93.5 M572 93.5 L584 93.5" stroke="#5cb6f2" stroke-width="1.2"/><path d="M469.6 124.8 L469.6 115 Q469.6 105.5 479 105.5 L488.5 105.5" stroke="#5cb6f2" stroke-width="1.2" fill="none"/><path d="M469.6 118 L469.6 124.8 M482 105.5 L488.8 105.5" stroke="#d0d0d0" stroke-width="1.2"/><path d="M564.6 109.5 L569.5 105.5 L583.5 105.5 L583.5 118.5 L578.5 123.2 M578.5 109.5 L583.5 105.5" stroke="#5cb6f2" stroke-width="1.2" fill="none"/><rect x="564.6" y="109.5" width="13.9" height="13.7" stroke="#bdbdbd" stroke-width="1.4" fill="none"/><rect x="470.5" y="137.5" width="6.8" height="6.8" stroke="#9a9a9a" stroke-width="1.2" fill="none"/><rect x="479.5" y="137.5" width="6.8" height="6.8" stroke="#5cb6f2" stroke-width="1.2" fill="none"/><rect x="470.5" y="146.5" width="6.8" height="6.8" stroke="#5cb6f2" stroke-width="1.2" fill="none"/><rect x="479.5" y="146.5" width="6.8" height="6.8" stroke="#5cb6f2" stroke-width="1.2" fill="none"/><path d="M584 139.3 L570.5 139.3 A6.8 6.8 0 0 0 570.5 152.8 L584 152.8" stroke="#5cb6f2" stroke-width="1.3" fill="none"/><path d="M584 142.7 L571 142.7 A3.3 3.3 0 0 0 571 149.3 L584 149.3" stroke="#bdbdbd" stroke-width="1.3" fill="none"/></svg>
<svg style="position:absolute;left:538.8px;top:82px;" width="6.2" height="4" viewBox="0 0 6.2 4"><polygon points="0,0 6.2,0 3.1,4" fill="#dcdcdc"/></svg>
<svg style="position:absolute;left:543.2px;top:113px;" width="6.2" height="4" viewBox="0 0 6.2 4"><polygon points="0,0 6.2,0 3.1,4" fill="#dcdcdc"/></svg>
<svg style="position:absolute;left:541px;top:144px;" width="6.2" height="4" viewBox="0 0 6.2 4"><polygon points="0,0 6.2,0 3.1,4" fill="#dcdcdc"/></svg>
<svg style="position:absolute;left:462.2px;top:175px;" width="10" height="5.2" viewBox="0 0 10 5.2"><polygon points="0,0 10,0 5.0,5.2" fill="#dcdcdc"/></svg>
<svg style="position:absolute;left:0px;top:0px;" width="800" height="190" viewBox="0 0 800 190"><path d="M612 109 L625.5 73.9 L630.9 73.9 L644.4 109 L639.2 109 L635.2 99.8 L621 99.8 L617.2 109 Z M622.6 95.7 L633.9 95.7 L628.3 81.5 Z" fill="#dadada" fill-rule="evenodd"/><path d="M674.5 72 L674.5 112 M713.5 72 L713.5 112 M678 79.8 L710 79.8" stroke="#d0d0d0" stroke-width="1.2"/><polygon points="675,79.8 680.5,77 680.5,82.6" fill="#d0d0d0"/><polygon points="713,79.8 707.5,77 707.5,82.6" fill="#d0d0d0"/><polygon points="692.3,98.5 693.8,90.5 695.3,98.5" fill="#f6c86c"/><polygon points="684.5,94 691,98.5 688.5,101" fill="#f6c86c"/><polygon points="703.5,94 697,98.5 699.5,101" fill="#f6c86c"/><polygon points="678.5,106.5 686.5,104.3 686.5,108" fill="#f6c86c"/><polygon points="709.5,106.5 701.5,104.3 701.5,108" fill="#f6c86c"/><path d="M738.6 75 L738.6 92 M757.3 75 L757.3 92" stroke="#d0d0d0" stroke-width="1.2"/><path d="M741 81 L755 81" stroke="#5cb6f2" stroke-width="1.2"/><polygon points="739.5,81 743,79 743,83" fill="#5cb6f2"/><polygon points="756.5,81 753,79 753,83" fill="#5cb6f2"/><circle cx="753" cy="111" r="3.7" stroke="#d8d8d8" stroke-width="1.2" fill="none"/><path d="M749.5 112 L745 112 L740 120" stroke="#d8d8d8" stroke-width="1.3" fill="none"/><polygon points="738.5,122 739.5,116 743.5,119.5" fill="#d8d8d8"/><rect x="739.2" y="137.4" width="17.6" height="16" stroke="#c8c8c8" stroke-width="1.1" fill="none"/><path d="M739.2 141.5 L756.8 141.5 M739.2 145.5 L756.8 145.5 M739.2 149.5 L756.8 149.5 M745 141.5 L745 153.4 M751 141.5 L751 153.4" stroke="#c8c8c8" stroke-width="1"/></svg>
<svg style="position:absolute;left:625px;top:141px;" width="6.2" height="4" viewBox="0 0 6.2 4"><polygon points="0,0 6.2,0 3.1,4" fill="#dcdcdc"/></svg>
<svg style="position:absolute;left:768px;top:82px;" width="6" height="4" viewBox="0 0 6 4"><polygon points="0,0 6,0 3.0,4" fill="#dcdcdc"/></svg>
<svg style="position:absolute;left:768px;top:113px;" width="6" height="4" viewBox="0 0 6 4"><polygon points="0,0 6,0 3.0,4" fill="#dcdcdc"/></svg>
<svg style="position:absolute;left:725.7px;top:175px;" width="10.5" height="5.2" viewBox="0 0 10.5 5.2"><polygon points="0,0 10.5,0 5.25,5.2" fill="#dcdcdc"/></svg>
<svg style="position:absolute;left:0px;top:0px;" width="1130" height="190" viewBox="0 0 1130 190"><polygon points="801.9,101.19999999999999 816.1,86.69999999999999 835.9,86.69999999999999 822,101.19999999999999" fill="#dadada" stroke="#3b4453" stroke-width="1.1"/><polygon points="801.9,93.89999999999999 816.1,79.39999999999999 835.9,79.39999999999999 822,93.89999999999999" fill="#dadada" stroke="#3b4453" stroke-width="1.1"/><polygon points="801.9,86.6 816.1,72.1 835.9,72.1 822,86.6" fill="#dadada" stroke="#3b4453" stroke-width="1.1"/><rect x="825" y="88.8" width="17" height="23.3" fill="#f0f0f0" stroke="#3b4453" stroke-width="0.8"/><rect x="827.8" y="91.4" width="10.8" height="8.4" fill="#76c2f7" stroke="#333" stroke-width="0.8"/><path d="M828.5 104.5 L838.5 104.5 M828.5 108.3 L838.5 108.3" stroke="#666" stroke-width="0.9"/><rect x="830" y="103" width="1" height="3" fill="#444"/><rect x="835.5" y="106.8" width="1" height="3" fill="#444"/><rect x="860.5" y="70.5" width="259" height="27" fill="#4b5567" stroke="#2d3440" stroke-width="1"/><circle cx="874.5" cy="81.5" r="6.3" fill="#f6c86c"/><rect x="871" y="86" width="7" height="4.5" fill="#f2f2f2"/><path d="M871 90.5 Q874.5 94 878 90.5" fill="#f2f2f2"/><circle cx="898.3" cy="83.5" r="5.3" fill="#f6c86c"/><path d="M905.80 83.50 L907.90 83.50" stroke="#f6c86c" stroke-width="1.3"/><path d="M903.60 88.80 L905.09 90.29" stroke="#f6c86c" stroke-width="1.3"/><path d="M898.30 91.00 L898.30 93.10" stroke="#f6c86c" stroke-width="1.3"/><path d="M893.00 88.80 L891.51 90.29" stroke="#f6c86c" stroke-width="1.3"/><path d="M890.80 83.50 L888.70 83.50" stroke="#f6c86c" stroke-width="1.3"/><path d="M893.00 78.20 L891.51 76.71" stroke="#f6c86c" stroke-width="1.3"/><path d="M898.30 76.00 L898.30 73.90" stroke="#f6c86c" stroke-width="1.3"/><path d="M903.60 78.20 L905.09 76.71" stroke="#f6c86c" stroke-width="1.3"/><rect x="914" y="84" width="13" height="9.3" fill="#f6c86c"/><path d="M919.5 84 L919.5 79 A4.5 4.5 0 0 1 928.5 79 L928.5 81" stroke="#f6c86c" stroke-width="2" fill="none"/><rect x="919.7" y="87" width="1.4" height="3.5" fill="#4b5567"/><rect x="940" y="76.2" width="16.5" height="16.5" fill="#0000f5" stroke="#cfd3da" stroke-width="1.3"/><polygon points="864,112.5 870,105.5 881,105.5 875,112.5" fill="#d6d6d6" stroke="#3b4453" stroke-width="0.9"/><circle cx="880.2" cy="118" r="4.1" fill="#5fd0d9"/><polygon points="878,121.5 882.5,121.5 880.2,125" fill="#f0f0f0"/><polygon points="894,119.5 900,113 913,113 907,119.5" fill="#74bdf5" stroke="#3b4453" stroke-width="0.9"/><polygon points="894,115.5 900,109 913,109 907,115.5" fill="#d6d6d6" stroke="#3b4453" stroke-width="0.9"/><polygon points="894,111.5 900,105 913,105 907,111.5" fill="#d6d6d6" stroke="#3b4453" stroke-width="0.9"/><path d="M913 116.5 L906 123.5" stroke="#e8e8e8" stroke-width="1.1"/><polygon points="904.5,125 905.5,119.5 910,124" fill="#e8e8e8"/><polygon points="924,112.5 930,105.5 941,105.5 935,112.5" fill="#d6d6d6" stroke="#3b4453" stroke-width="0.9"/><g stroke="#5fd0d9" stroke-width="1" fill="none"><path d="M937.5 114.5 L937.5 123 M933.8 116.6 L941.2 120.9 M933.8 120.9 L941.2 116.6"/><circle cx="937.5" cy="118.7" r="3.2"/></g><polygon points="954,112.5 960,105.5 971,105.5 965,112.5" fill="#d6d6d6" stroke="#3b4453" stroke-width="0.9"/><rect x="964.7" y="118.5" width="9.5" height="6.7" fill="#5fd0d9"/><path d="M966.5 118.5 L966.5 115.8 A3 3 0 0 1 972.5 115.8 L972.5 118.5" stroke="#5fd0d9" stroke-width="1.4" fill="none"/><rect x="968.9" y="120.5" width="1.2" height="2.6" fill="#3b4453"/><polygon points="984,124 990,117 1004,117 998,124" fill="#d6d6d6" stroke="#3b4453" stroke-width="0.9"/><polygon points="984,120 990,113 1004,113 998,120" fill="#d6d6d6" stroke="#3b4453" stroke-width="0.9"/><polygon points="984,116 990,109 1004,109 998,116" fill="#74bdf5" stroke="#3b4453" stroke-width="0.9"/><circle cx="994" cy="107" r="4" fill="#d6d6d6" stroke="#3b4453" stroke-width="0.8"/><polygon points="864,150.5 870,144 881,144 875,150.5" fill="#d6d6d6" stroke="#3b4453" stroke-width="0.9"/><polygon points="864,146.5 870,140 881,140 875,146.5" fill="#d6d6d6" stroke="#3b4453" stroke-width="0.9"/><polygon points="864,142.5 870,136 881,136 875,142.5" fill="#d6d6d6" stroke="#3b4453" stroke-width="0.9"/><circle cx="880.2" cy="149" r="4.1" fill="#f6c86c" stroke="#3b4453" stroke-width="0.8"/><polygon points="878,152.5 882.5,152.5 880.2,156" fill="#f0f0f0"/><polygon points="894,150.5 900,144 913,144 907,150.5" fill="#74bdf5" stroke="#3b4453" stroke-width="0.9"/><polygon points="894,146.5 900,140 913,140 907,146.5" fill="#d6d6d6" stroke="#3b4453" stroke-width="0.9"/><polygon points="894,142.5 900,136 913,136 907,142.5" fill="#d6d6d6" stroke="#3b4453" stroke-width="0.9"/><path d="M905 155.5 L911.5 149" stroke="#e8e8e8" stroke-width="1.1"/><polygon points="913,147.5 907.5,148.5 912,153" fill="#e8e8e8"/><polygon points="924,150.5 930,144 941,144 935,150.5" fill="#d6d6d6" stroke="#3b4453" stroke-width="0.9"/><polygon points="924,146.5 930,140 941,140 935,146.5" fill="#d6d6d6" stroke="#3b4453" stroke-width="0.9"/><polygon points="924,142.5 930,136 941,136 935,142.5" fill="#d6d6d6" stroke="#3b4453" stroke-width="0.9"/><circle cx="937.8" cy="149.5" r="3.6" fill="#f6c86c" stroke="#3b4453" stroke-width="1.2"/><rect x="942.60" y="148.70" width="1.6" height="1.6" fill="#f6c86c"/><rect x="940.96" y="152.66" width="1.6" height="1.6" fill="#f6c86c"/><rect x="937.00" y="154.30" width="1.6" height="1.6" fill="#f6c86c"/><rect x="933.04" y="152.66" width="1.6" height="1.6" fill="#f6c86c"/><rect x="931.40" y="148.70" width="1.6" height="1.6" fill="#f6c86c"/><rect x="933.04" y="144.74" width="1.6" height="1.6" fill="#f6c86c"/><rect x="937.00" y="143.10" width="1.6" height="1.6" fill="#f6c86c"/><rect x="940.96" y="144.74" width="1.6" height="1.6" fill="#f6c86c"/><polygon points="954,143.5 960,136.5 971,136.5 965,143.5" fill="#d6d6d6" stroke="#3b4453" stroke-width="0.9"/><rect x="962" y="148.5" width="9.5" height="7.5" fill="#f6c86c"/><path d="M970 148.5 L970 145.5 A3 3 0 0 1 976 145.5 L976 147.5" stroke="#f6c86c" stroke-width="1.4" fill="none"/><rect x="966.2" y="150.8" width="1.2" height="2.6" fill="#3b4453"/><polygon points="984,150.5 990,144 1001,144 995,150.5" fill="#d6d6d6" stroke="#3b4453" stroke-width="0.9"/><polygon points="984,146.5 990,140 1001,140 995,146.5" fill="#d6d6d6" stroke="#3b4453" stroke-width="0.9"/><polygon points="984,142.5 990,136 1001,136 995,142.5" fill="#d6d6d6" stroke="#3b4453" stroke-width="0.9"/><path d="M996.5 150 L1002.5 156" stroke="#f6c86c" stroke-width="4"/><path d="M1000.5 149.5 L1004 146" stroke="#f0f0f0" stroke-width="3.2"/></svg>
<div style="position:absolute;left:963.60px;top:77.00px;font:normal normal 15px/15px 'Liberation Sans', sans-serif;color:#ececec;white-space:pre;transform:scaleX(0.9917);transform-origin:0 0;">parabola_b</div>
<svg style="position:absolute;left:1108px;top:82px;" width="10" height="5" viewBox="0 0 10 5"><polygon points="0,0 10,0 5.0,5" fill="#dcdcdc"/></svg>
<svg style="position:absolute;left:972.2px;top:175px;" width="10" height="5.2" viewBox="0 0 10 5.2"><polygon points="0,0 10,0 5.0,5.2" fill="#dcdcdc"/></svg>
<svg style="position:absolute;left:0px;top:0px;" width="1230" height="190" viewBox="0 0 1230 190"><polygon points="1148,70 1165,70 1170,75.5 1170,101 1148,101" fill="#7cc2f5"/><polygon points="1165,70 1170,75.5 1165,75.5" fill="#c8e6fb"/><rect x="1130.8" y="83" width="25.8" height="18.6" fill="#666a73" stroke="#a8a8a8" stroke-width="1.1"/><circle cx="1155.8" cy="100.8" r="8.8" fill="#666a73" fill-opacity="0.85" stroke="#a8a8a8" stroke-width="1.1"/><rect x="1129" y="99.5" width="3.2" height="3.2" fill="#d8d8d8"/><rect x="1180" y="81" width="11" height="8.5" fill="#666a73" stroke="#a8a8a8" stroke-width="1"/><circle cx="1191.5" cy="90.5" r="4" fill="#666a73" stroke="#a8a8a8" stroke-width="1"/><rect x="1179" y="88.5" width="2" height="2" fill="#d8d8d8"/><g fill="#f6c86c"><polygon points="1194,73.5 1195.3,77.5 1199,76.5 1196.5,79.5 1199,82.5 1195.3,81.5 1194,85.5 1192.7,81.5 1189,82.5 1191.5,79.5 1189,76.5 1192.7,77.5" fill="#f6c86c"/></g><rect x="1180" y="111.5" width="11" height="8.5" fill="#666a73" stroke="#a8a8a8" stroke-width="1"/><circle cx="1191.5" cy="121.0" r="4" fill="#666a73" stroke="#a8a8a8" stroke-width="1"/><rect x="1179" y="119.0" width="2" height="2" fill="#d8d8d8"/><path d="M1188 119 L1196 110" stroke="#f6c86c" stroke-width="3"/><path d="M1195.5 110.5 L1198 107.5" stroke="#e85050" stroke-width="3"/><polygon points="1179,141 1183,137 1190,137 1196,146 1188,156" fill="#d2d2d2"/><path d="M1186 148 L1194 139" stroke="#f6c86c" stroke-width="3"/><path d="M1193.5 139.5 L1196 136.5" stroke="#e85050" stroke-width="3"/><path d="M1182 144 L1190 150" stroke="#888" stroke-width="0.8"/></svg>
<svg style="position:absolute;left:1146.9px;top:138.7px;" width="6.2" height="4.2" viewBox="0 0 6.2 4.2"><polygon points="0,0 6.2,0 3.1,4.2" fill="#dcdcdc"/></svg>
<svg style="position:absolute;left:1209.3px;top:144px;" width="5.8" height="4" viewBox="0 0 5.8 4"><polygon points="0,0 5.8,0 2.9,4" fill="#dcdcdc"/></svg>
<svg style="position:absolute;left:1190px;top:175px;" width="10" height="5.2" viewBox="0 0 10 5.2"><polygon points="0,0 10,0 5.0,5.2" fill="#dcdcdc"/></svg>
<svg style="position:absolute;left:0px;top:0px;" width="1510" height="190" viewBox="0 0 1510 190"><rect x="1244.5" y="72" width="25" height="35" fill="#d6d6d6"/><rect x="1247.8" y="74.5" width="16.5" height="13" fill="#86c8f7" stroke="#555" stroke-width="0.8"/><path d="M1249 93.5 L1264 93.5 M1249 101 L1264 101" stroke="#666" stroke-width="1"/><rect x="1251" y="92" width="1.5" height="3.2" fill="#555"/><rect x="1259" y="99.5" width="1.5" height="3.2" fill="#555"/><polygon points="1263,100.6 1269.4,97.9 1279.2,108.7 1274.3,111.9" fill="#f8d27a"/><polygon points="1270,97.4 1273.3,94.5 1276.5,97 1280.2,94.3 1283,96.5 1280,99.8 1282.8,103.5 1280.2,107.2" fill="#efefef" stroke="#3b4453" stroke-width="0.8"/><path d="M1313 84 L1313.00 74.00 A10 10 0 0 1 1321.66 79.00 Z" fill="#f7b733"/><path d="M1313 84 L1321.66 79.00 A10 10 0 0 1 1321.66 89.00 Z" fill="#f78f3f"/><path d="M1313 84 L1321.66 89.00 A10 10 0 0 1 1313.00 94.00 Z" fill="#ea5455"/><path d="M1313 84 L1313.00 94.00 A10 10 0 0 1 1304.34 89.00 Z" fill="#8f5cf2"/><path d="M1313 84 L1304.34 89.00 A10 10 0 0 1 1304.34 79.00 Z" fill="#19b7e0"/><path d="M1313 84 L1304.34 79.00 A10 10 0 0 1 1313.00 74.00 Z" fill="#5ac26b"/><rect x="1303" y="105" width="20" height="1.3" fill="#d8d8d8"/><rect x="1303" y="108.5" width="20" height="2.6" fill="#d8d8d8"/><rect x="1303" y="113.5" width="20" height="3.6" fill="#d8d8d8"/><rect x="1303" y="120" width="20" height="4.8" fill="#d8d8d8"/><g stroke="#d0d0d0" stroke-width="1.1"><path d="M1303 138.5 L1322.5 138.5" stroke-dasharray="2 2"/><path d="M1303 141.5 L1322.5 141.5" stroke-dasharray="3.5 1.5"/><path d="M1303 144.8 L1322.5 144.8"/><path d="M1303 147.8 L1322.5 147.8" stroke-dasharray="3.5 1.5"/><path d="M1303 151 L1322.5 151" stroke-dasharray="4 1"/></g><rect x="1326.5" y="70.5" width="170" height="27.0" fill="#4b5567" stroke="#2d3440" stroke-width="1"/><rect x="1326.5" y="101.5" width="170" height="27.0" fill="#4b5567" stroke="#2d3440" stroke-width="1"/><rect x="1326.5" y="132.5" width="170" height="27.0" fill="#4b5567" stroke="#2d3440" stroke-width="1"/><rect x="1335.5" y="74.5" width="19" height="19" fill="#0000f5" stroke="#e4e4e4" stroke-width="1.6"/><path d="M1335 114.5 L1415 114.5 M1335 146.2 L1415 146.2" stroke="#f0f0f0" stroke-width="1.2"/><path d="M1488 174 L1493 179 M1493 175 L1493 179 L1489 179" stroke="#d8d8d8" stroke-width="1.2" fill="none"/></svg>
<div style="position:absolute;left:1359.77px;top:77.00px;font:normal normal 15px/15px 'Liberation Sans', sans-serif;color:#ececec;white-space:pre;transform:scaleX(0.9309);transform-origin:0 0;">ByLayer</div>
<div style="position:absolute;left:1416.97px;top:107.80px;font:normal normal 15px/15px 'Liberation Sans', sans-serif;color:#ececec;white-space:pre;transform:scaleX(0.9291);transform-origin:0 0;">ByLayer</div>
<div style="position:absolute;left:1416.97px;top:139.00px;font:normal normal 15px/15px 'Liberation Sans', sans-serif;color:#ececec;white-space:pre;transform:scaleX(0.9291);transform-origin:0 0;">ByLayer</div>
<svg style="position:absolute;left:1485px;top:82.5px;" width="10" height="5" viewBox="0 0 10 5"><polygon points="0,0 10,0 5.0,5" fill="#dcdcdc"/></svg>
<svg style="position:absolute;left:1485px;top:113.5px;" width="10" height="5" viewBox="0 0 10 5"><polygon points="0,0 10,0 5.0,5" fill="#dcdcdc"/></svg>
<svg style="position:absolute;left:1485px;top:145px;" width="10" height="5" viewBox="0 0 10 5"><polygon points="0,0 10,0 5.0,5" fill="#dcdcdc"/></svg>
<svg style="position:absolute;left:1384.9px;top:175px;" width="10" height="5.2" viewBox="0 0 10 5.2"><polygon points="0,0 10,0 5.0,5.2" fill="#dcdcdc"/></svg>
<svg style="position:absolute;left:0px;top:0px;" width="1916" height="190" viewBox="0 0 1916 190"><path d="M1510.5 78.5 L1508 78.5 L1508 111.5 L1510.5 111.5 M1532.5 93 L1535 93 L1535 111.5 L1532.5 111.5" stroke="#d0d0d0" stroke-width="1.2" fill="none"/><rect x="1515.5" y="83" width="11.5" height="9" fill="#4f81b5" stroke="#7cc2f5" stroke-width="1"/><circle cx="1521.5" cy="102" r="6.2" fill="#666a73" stroke="#a8a8a8" stroke-width="1"/><polygon points="1536.0,72.5 1537.33,78.41 1541.88,74.41 1539.48,79.97 1545.51,79.41 1540.3,82.5 1545.51,85.59 1539.48,85.03 1541.88,90.59 1537.33,86.59 1536.0,92.5 1534.67,86.59 1530.12,90.59 1532.52,85.03 1526.49,85.59 1531.7,82.5 1526.49,79.41 1532.52,79.97 1530.12,74.41 1534.67,78.41" fill="#f6c86c"/><rect x="1558.5" y="76.5" width="7.5" height="6.5" fill="#4f81b5" stroke="#7cc2f5" stroke-width="0.9"/><circle cx="1562" cy="87.5" r="3.5" fill="#666a73" stroke="#a8a8a8" stroke-width="0.9"/><path d="M1570.5 74.5 L1572.5 74.5 L1572.5 93.5 L1570.5 93.5" stroke="#d0d0d0" stroke-width="1" fill="none"/><path d="M1568 83 L1575 90 M1575 83 L1568 90" stroke="#e85050" stroke-width="1.8"/><path d="M1558 105.5 L1556.5 105.5 L1556.5 122 L1558 122 M1567.5 105.5 L1569 105.5 L1569 118" stroke="#d0d0d0" stroke-width="1" fill="none"/><rect x="1559" y="107.5" width="6.5" height="5" fill="#4f81b5" stroke="#7cc2f5" stroke-width="0.9"/><circle cx="1562" cy="117" r="2.8" fill="#666a73" stroke="#a8a8a8" stroke-width="0.9"/><path d="M1567 124 L1573.5 116.5" stroke="#f6c86c" stroke-width="3"/><path d="M1573 117 L1575.5 114" stroke="#e85050" stroke-width="3"/><rect x="1552.3" y="132.2" width="28.5" height="26.5" fill="#44546a" stroke="#62b6f2" stroke-width="1"/><path d="M1558 136.5 L1557 136.5 L1557 153.5 L1558 153.5 M1568 136.5 L1569.5 136.5 L1569.5 145" stroke="#b8b8b8" stroke-width="1" fill="none"/><rect x="1560" y="139" width="6" height="5" fill="none" stroke="#5ac26b" stroke-width="1"/><circle cx="1563" cy="148" r="2.8" fill="none" stroke="#5ac26b" stroke-width="1"/><polygon points="1568.5,145 1568.5,155 1571,152.5 1573.5,156.5 1575,155.7 1572.8,151.8 1576,151.5" fill="#f0f0f0"/><rect x="1612" y="87.7" width="35.7" height="8.2" fill="#f6c86c"/><rect x="1615.55" y="87.7" width="0.9" height="3" fill="#3b4453"/><rect x="1619.10" y="87.7" width="0.9" height="4" fill="#3b4453"/><rect x="1622.65" y="87.7" width="0.9" height="3" fill="#3b4453"/><rect x="1626.20" y="87.7" width="0.9" height="4" fill="#3b4453"/><rect x="1629.75" y="87.7" width="0.9" height="3" fill="#3b4453"/><rect x="1633.30" y="87.7" width="0.9" height="4" fill="#3b4453"/><rect x="1636.85" y="87.7" width="0.9" height="3" fill="#3b4453"/><rect x="1640.40" y="87.7" width="0.9" height="4" fill="#3b4453"/><rect x="1643.95" y="87.7" width="0.9" height="3" fill="#3b4453"/><polygon points="1683,74 1689,74 1686.5,78 1690,78 1684,84 1685.5,79.5 1682,79.5" fill="#f6c86c"/><rect x="1685.5" y="81.5" width="11.5" height="11.5" fill="#efefef"/><g fill="#3a8fd8"><rect x="1688" y="84" width="1.5" height="1.5"/><rect x="1688" y="87" width="1.5" height="1.5"/><rect x="1688" y="90" width="1.5" height="1.5"/></g><path d="M1690.5 84.8 L1695 84.8 M1690.5 87.8 L1695 87.8 M1690.5 90.8 L1695 90.8" stroke="#3a8fd8" stroke-width="0.9"/><polygon points="1677,80.5 1677,93 1680,90 1682.5,94.5 1684.5,93.5 1682,89.5 1686,89" fill="#f0f0f0"/><rect x="1677.5" y="105.5" width="17.5" height="17.5" fill="none" stroke="#5ac26b" stroke-width="1" stroke-dasharray="1.5 1"/><rect x="1680" y="112" width="9" height="9" fill="#4aa35c"/><rect x="1684" y="107.5" width="10" height="10" fill="#6fcf85"/><polygon points="1689.5,114 1689.5,125 1692,122.5 1694.5,126.5 1696.3,125.5 1694,121.5 1697.5,121" fill="#f0f0f0"/><rect x="1679.5" y="136" width="14.5" height="20" fill="#d6d6d6"/><rect x="1681.5" y="138" width="10.5" height="4" fill="#777"/><rect x="1681.8" y="143.8" width="2.4" height="1.9" fill="#777"/><rect x="1685.4" y="143.8" width="2.4" height="1.9" fill="#777"/><rect x="1689.0" y="143.8" width="2.4" height="1.9" fill="#777"/><rect x="1681.8" y="146.8" width="2.4" height="1.9" fill="#777"/><rect x="1685.4" y="146.8" width="2.4" height="1.9" fill="#777"/><rect x="1689.0" y="146.8" width="2.4" height="1.9" fill="#777"/><rect x="1681.8" y="149.8" width="2.4" height="1.9" fill="#777"/><rect x="1685.4" y="149.8" width="2.4" height="1.9" fill="#777"/><rect x="1689.0" y="149.8" width="2.4" height="1.9" fill="#777"/><rect x="1681.8" y="152.8" width="2.4" height="1.9" fill="#777"/><rect x="1685.4" y="152.8" width="2.4" height="1.9" fill="#777"/><rect x="1689.0" y="152.8" width="2.4" height="1.9" fill="#777"/><rect x="1723.8" y="75.5" width="28" height="32.3" fill="#deb177"/><rect x="1728" y="73" width="19.5" height="6" rx="2" fill="#f0f0f0"/><rect x="1734" y="71" width="7" height="3" rx="1.5" fill="#f0f0f0"/><polygon points="1732.7,85 1749,85 1756.2,92 1756.2,112.8 1732.7,112.8" fill="#d9d9d9"/><polygon points="1749,85 1756.2,92 1749,92" fill="#f2f2f2"/><rect x="1775.6" y="73.8" width="15" height="17.5" fill="#d2d2d2"/><path d="M1778 78 L1788 78 M1778 82 L1788 82 M1778 86 L1785 86" stroke="#999" stroke-width="0.9"/><path d="M1785 80 L1794 91 M1796 80 L1787.5 91" stroke="#f0f0f0" stroke-width="1.5"/><circle cx="1787" cy="92.5" r="2.2" fill="#3b4453" stroke="#f0f0f0" stroke-width="1.2"/><circle cx="1794" cy="92.5" r="2.2" fill="#3b4453" stroke="#f0f0f0" stroke-width="1.2"/><polygon points="1777.8,105 1786,105 1786,122 1777.8,122" fill="#c8c8c8"/><polygon points="1781.5,108 1790,108 1794,112 1794,125 1781.5,125" fill="#d9d9d9"/><path d="M1777.8 105 L1786 105" stroke="#f0f0f0" stroke-width="0.8"/><polygon points="1840,77 1857.5,77 1857.5,90 1880,90 1880,107.2 1840,107.2" fill="#d9d9d9"/><path d="M1887 174 L1892.5 179.5 M1892.5 175 L1892.5 179.5 L1888 179.5" stroke="#d8d8d8" stroke-width="1.2" fill="none"/></svg>
<svg style="position:absolute;left:1627.2px;top:141.2px;" width="6.2" height="3.8" viewBox="0 0 6.2 3.8"><polygon points="0,0 6.2,0 3.1,3.8" fill="#dcdcdc"/></svg>
<svg style="position:absolute;left:1736.8px;top:141.6px;" width="6.4" height="3.9" viewBox="0 0 6.4 3.9"><polygon points="0,0 6.4,0 3.2,3.9" fill="#dcdcdc"/></svg>
<svg style="position:absolute;left:1803px;top:82px;" width="6.3" height="4" viewBox="0 0 6.3 4"><polygon points="0,0 6.3,0 3.15,4" fill="#dcdcdc"/></svg>
<svg style="position:absolute;left:1803px;top:113px;" width="6.3" height="4" viewBox="0 0 6.3 4"><polygon points="0,0 6.3,0 3.15,4" fill="#dcdcdc"/></svg>
<svg style="position:absolute;left:1856.8px;top:140px;" width="6.5" height="4" viewBox="0 0 6.5 4"><polygon points="0,0 6.5,0 3.25,4" fill="#dcdcdc"/></svg>
<svg style="position:absolute;left:1565.2px;top:175px;" width="10" height="5.2" viewBox="0 0 10 5.2"><polygon points="0,0 10,0 5.0,5.2" fill="#dcdcdc"/></svg>
<svg style="position:absolute;left:1670px;top:175px;" width="10" height="5.2" viewBox="0 0 10 5.2"><polygon points="0,0 10,0 5.0,5.2" fill="#dcdcdc"/></svg>
<svg style="position:absolute;left:1866px;top:175px;" width="10" height="5.2" viewBox="0 0 10 5.2"><polygon points="0,0 10,0 5.0,5.2" fill="#dcdcdc"/></svg>
<svg style="position:absolute;left:0px;top:0px;pointer-events:none" width="1916" height="1020" viewBox="0 0 1916 1020"><g stroke="#e6e6e6" stroke-width="1.2"><path d="M1241.5 987.8 L1241.5 1007.1 M1236.9 992.50 L1256 992.50"/><path d="M1246.5 987.8 L1246.5 1007.1 M1236.9 997.55 L1256 997.55"/><path d="M1251.5 987.8 L1251.5 1007.1 M1236.9 1002.60 L1256 1002.60"/></g><rect x="1269.0" y="989.9" width="3" height="3" fill="#e8e8e8"/><rect x="1274.9" y="989.9" width="3" height="3" fill="#e8e8e8"/><rect x="1280.8" y="989.9" width="3" height="3" fill="#e8e8e8"/><rect x="1269.0" y="995.9" width="3" height="3" fill="#e8e8e8"/><rect x="1274.9" y="995.9" width="3" height="3" fill="#e8e8e8"/><rect x="1280.8" y="995.9" width="3" height="3" fill="#e8e8e8"/><rect x="1269.0" y="1001.8" width="3" height="3" fill="#e8e8e8"/><rect x="1274.9" y="1001.8" width="3" height="3" fill="#e8e8e8"/><rect x="1280.8" y="1001.8" width="3" height="3" fill="#e8e8e8"/><path d="M1320 995 L1327 995 M1323.5 991.3 L1323.5 998.7" stroke="#e8e8e8" stroke-width="1.3"/><rect x="1327.5" y="1000" width="12.5" height="5.2" fill="#e0e0e0" stroke="#9a9a9a" stroke-width="0.6"/><path d="M1352 989.5 L1352 1007.3 L1371.5 1007.3 M1352 1001 L1357 1001 L1357 1007.3" stroke="#f2f2f2" stroke-width="1.3" fill="none"/><circle cx="1389" cy="998.5" r="7" stroke="#c8c8c8" stroke-width="1.3" fill="none"/><path d="M1389 998.5 L1397.5 989.5 M1389 998 L1401 998" stroke="#c8c8c8" stroke-width="1.3"/><path d="M1441 988.3 L1441 1006" stroke="#53c45a" stroke-width="1.3"/><path d="M1433 988.5 L1448.3 1005.8" stroke="#d05050" stroke-width="1.3"/><rect x="1439" y="995" width="4" height="4" fill="#3b4453" stroke="#e8e8e8" stroke-width="1"/><path d="M1482.5 1004.5 L1496 991.5 M1482 1005.5 L1502 1005.5" stroke="#f2f2f2" stroke-width="1.3"/><rect x="1487.5" y="996" width="3.5" height="3.5" fill="#f2f2f2"/><rect x="1514" y="990.5" width="17.5" height="17" stroke="#f2f2f2" stroke-width="1.3" fill="none"/><rect x="1511.5" y="988.3" width="5" height="5" fill="#5b8bc4" stroke="#f2f2f2" stroke-width="1.1"/><polygon points="1573.5,988 1576.1,996 1575.3,998.5 1582.3,1007.8 1573.5,1003 1564.7,1007.8 1571.7,998.5 1570.9,996" fill="#ffffff"/><circle cx="1581.2" cy="992" r="3.6" stroke="#f4f4f4" stroke-width="1.1" fill="none"/><polygon points="1603.5,988 1606.1,996 1605.3,998.5 1612.3,1007.8 1603.5,1003 1594.7,1007.8 1601.7,998.5 1600.9,996" fill="#d8d8d8"/><polygon points="1612,988.5 1608.5,993.5 1611,993.5 1608,997.5 1613.5,992 1611,992 1613.5,988.5" fill="#d8d8d8"/><polygon points="1634.3,988 1636.8999999999999,996 1636.1,998.5 1643.1,1007.8 1634.3,1003 1625.5,1007.8 1632.5,998.5 1631.7,996" fill="#d8d8d8"/><circle cx="1710" cy="998" r="7" fill="#d2d2d2"/><circle cx="1710" cy="998" r="2.8" fill="#3b4453"/><rect x="1708.0" y="987.8" width="4" height="4" fill="#d2d2d2" transform="rotate(0 1710 998)"/><rect x="1708.0" y="987.8" width="4" height="4" fill="#d2d2d2" transform="rotate(45 1710 998)"/><rect x="1708.0" y="987.8" width="4" height="4" fill="#d2d2d2" transform="rotate(90 1710 998)"/><rect x="1708.0" y="987.8" width="4" height="4" fill="#d2d2d2" transform="rotate(135 1710 998)"/><rect x="1708.0" y="987.8" width="4" height="4" fill="#d2d2d2" transform="rotate(180 1710 998)"/><rect x="1708.0" y="987.8" width="4" height="4" fill="#d2d2d2" transform="rotate(225 1710 998)"/><rect x="1708.0" y="987.8" width="4" height="4" fill="#d2d2d2" transform="rotate(270 1710 998)"/><rect x="1708.0" y="987.8" width="4" height="4" fill="#d2d2d2" transform="rotate(315 1710 998)"/><path d="M1751 997.6 L1770 997.6 M1760.5 988 L1760.5 1007.3" stroke="#e2e2e2" stroke-width="2.2"/><rect x="1784.3" y="988.5" width="7.5" height="7.5" stroke="#dcdcdc" stroke-width="1.1" fill="none"/><circle cx="1799.5" cy="996.8" r="4.3" stroke="#dcdcdc" stroke-width="1.1" fill="none"/><path d="M1787 1007.5 L1791.7 1000 L1796.4 1007.5 Z" stroke="#dcdcdc" stroke-width="1.1" fill="none"/><polygon points="1817,985 1831.5,985 1837.3,990.8 1837.3,1002 1831,1003.5 1817,1003.5" fill="#3066aa"/><polygon points="1831.5,985 1837.3,990.8 1831.5,990.8" fill="#87a6cc"/><path d="M1817 990.3 L1831 990.3 M1822.5 985 L1822.5 999" stroke="#e6ecf2" stroke-width="1.3"/><circle cx="1822.5" cy="990.3" r="2.2" fill="#e6ecf2"/><circle cx="1822.5" cy="990.3" r="0.9" fill="#3066aa"/><polygon points="1817,999 1827,999 1826,1003 1827,1007.5 1817,1007.5" fill="#f4b425"/><path d="M1827.5 1003.5 L1832 1008.3 L1841 999.5" stroke="#52b054" stroke-width="2.6" fill="none"/><rect x="1855.5" y="990.5" width="19.5" height="14" stroke="#e6e6e6" stroke-width="1" fill="none"/><path d="M1858.5 1001.5 L1862 998 M1858.5 1001.5 L1858.5 999 M1858.5 1001.5 L1861 1001.5 M1871.5 993.5 L1868 997 M1871.5 993.5 L1869 993.5 M1871.5 993.5 L1871.5 996" stroke="#e6e6e6" stroke-width="1"/><rect x="1884.7" y="988.8" width="20.5" height="2.6" fill="#ececec"/><rect x="1884.7" y="996.4" width="20.5" height="2.6" fill="#ececec"/><rect x="1884.7" y="1003.8" width="20.5" height="2.6" fill="#ececec"/></svg>
<svg style="position:absolute;left:1297px;top:995px;" width="10" height="5" viewBox="0 0 10 5"><polygon points="0,0 10,0 5.0,5" fill="#dcdcdc"/></svg>
<svg style="position:absolute;left:1410.7px;top:995px;" width="10" height="5" viewBox="0 0 10 5"><polygon points="0,0 10,0 5.0,5" fill="#dcdcdc"/></svg>
<svg style="position:absolute;left:1461px;top:995px;" width="10" height="5" viewBox="0 0 10 5"><polygon points="0,0 10,0 5.0,5" fill="#dcdcdc"/></svg>
<svg style="position:absolute;left:1542px;top:995px;" width="10" height="5" viewBox="0 0 10 5"><polygon points="0,0 10,0 5.0,5" fill="#dcdcdc"/></svg>
<svg style="position:absolute;left:1677px;top:995px;" width="10" height="5" viewBox="0 0 10 5"><polygon points="0,0 10,0 5.0,5" fill="#dcdcdc"/></svg>
<svg style="position:absolute;left:1730px;top:995px;" width="10" height="5" viewBox="0 0 10 5"><polygon points="0,0 10,0 5.0,5" fill="#dcdcdc"/></svg>
<svg style="position:absolute;left:0px;top:0px;" width="1916" height="1020" viewBox="0 0 1916 1020"><path d="M392.4 226 L846.8 492.9" stroke="#3a3a3a" stroke-width="1.2"/><path d="M4 309.5 L84 226" stroke="#3a3a3a" stroke-width="1.2"/><path d="M104.2 226 L105 230" stroke="#00c000" stroke-width="1.4"/><path d="M1229.9 225.8 L1912 381.4" stroke="#e00000" stroke-width="1.3"/><path d="M850.4 496.1 859.3 486.1 870.0 478.0 881.9 471.6 894.6 466.7 907.6 463.1 920.8 460.4 934.2 458.6 947.6 457.4 960.9 456.8 974.3 456.6 987.6 456.8 1000.9 457.4 1014.2 458.2 1027.4 459.3 1040.6 460.6 1053.7 462.1 1066.8 463.8 1079.9 465.7 1092.9 467.7 1105.9 469.9M850.4 496.1 859.6 488.2 870.6 482.0 882.8 477.5 895.7 474.3 909.0 472.2 922.5 471.0 936.0 470.5 949.6 470.6 963.1 471.1 976.7 472.0 990.2 473.3 1003.6 474.8 1017.0 476.6 1030.4 478.6 1043.7 480.8 1057.0 483.2 1070.2 485.7 1083.4 488.4 1096.5 491.2 1109.6 494.1M850.4 496.1 859.1 491.1 869.7 487.7 881.5 485.8 894.1 485.0 907.0 485.1 920.2 485.9 933.4 487.2 946.7 489.0 960.0 491.2 973.3 493.7 986.5 496.4 999.8 499.4 1013.0 502.5 1026.1 505.8 1039.3 509.3 1052.3 512.9 1065.4 516.6 1078.4 520.3 1091.4 524.2 1104.3 528.2M850.4 496.1 857.9 494.6 867.4 494.5 878.2 495.6 889.7 497.7 901.8 500.4 914.1 503.6 926.6 507.2 939.2 511.1 951.8 515.2 964.5 519.5 977.2 524.0 989.8 528.6 1002.5 533.4 1015.1 538.2 1027.7 543.2 1040.3 548.2 1052.9 553.2 1065.5 558.4 1078.0 563.6 1090.5 568.8M850.4 496.1 856.1 498.3 863.9 501.8 873.0 506.2 883.2 511.2 893.9 516.6 905.0 522.4 916.3 528.3 927.8 534.5 939.5 540.7 951.2 547.0 962.9 553.3 974.7 559.7 986.5 566.2 998.4 572.6 1010.2 579.1 1022.1 585.7 1034.0 592.2 1045.8 598.8 1057.7 605.3 1069.6 611.9M850.4 496.1 853.9 501.9 859.5 508.7 866.7 516.2 875.0 524.2 884.0 532.3 893.6 540.5 903.5 548.7 913.7 556.9 924.1 565.1 934.6 573.3 945.2 581.5 955.9 589.6 966.7 597.7 977.6 605.7 988.5 613.7 999.4 621.7 1010.4 629.7 1021.4 637.6 1032.4 645.5 1043.5 653.4M850.4 496.1 851.4 504.9 854.7 514.7 859.7 524.9 866.0 535.3 873.2 545.7 881.1 556.0 889.5 566.2 898.2 576.3 907.2 586.2 916.4 596.0 925.8 605.7 935.3 615.3 945.0 624.8 954.7 634.2 964.6 643.5 974.5 652.7 984.5 661.9 994.6 671.0 1004.7 680.1 1014.8 689.0M850.4 496.1 849.0 507.2 849.9 519.1 852.8 531.4 857.1 543.6 862.5 555.7 868.7 567.6 875.5 579.2 882.8 590.6 890.4 601.8 898.3 612.8 906.5 623.7 914.8 634.4 923.4 644.9 932.1 655.3 940.9 665.6 949.8 675.7 958.9 685.8 968.0 695.8 977.2 705.7 986.5 715.5M850.4 496.1 846.8 508.4 845.7 521.6 846.6 534.9 849.2 548.2 853.0 561.2 857.7 574.0 863.1 586.4 869.0 598.6 875.4 610.5 882.2 622.1 889.3 633.6 896.6 644.9 904.1 656.0 911.8 667.0 919.7 677.8 927.8 688.5 936.0 699.0 944.2 709.5 952.6 719.9 961.1 730.1M850.4 496.1 845.1 508.6 842.4 521.8 841.8 535.3 843.0 548.6 845.5 561.7 849.0 574.6 853.3 587.1 858.3 599.3 863.7 611.3 869.6 623.0 875.8 634.5 882.3 645.9 889.0 657.0 896.0 668.0 903.2 678.9 910.5 689.7 918.0 700.3 925.7 710.8 933.4 721.2 941.3 731.5M850.4 496.1 844.1 507.5 840.3 519.8 838.8 532.3 839.1 544.9 840.8 557.2 843.6 569.3 847.2 581.2 851.5 592.8 856.4 604.2 861.7 615.4 867.4 626.4 873.4 637.2 879.6 647.9 886.1 658.4 892.8 668.9 899.8 679.2 906.8 689.4 914.0 699.5 921.4 709.5 928.9 719.5M850.4 496.1 843.8 505.4 839.7 515.7 837.9 526.4 837.9 537.3 839.4 548.1 842.0 558.7 845.4 569.3 849.5 579.6 854.2 589.8 859.3 599.9 864.8 609.9 870.7 619.7 876.8 629.5 883.2 639.1 889.7 648.6 896.5 658.1 903.5 667.5 910.6 676.8 917.8 686.0 925.2 695.2M850.4 496.1 844.2 502.5 840.6 510.0 839.2 518.1 839.6 526.6 841.4 535.2 844.3 543.9 848.0 552.5 852.4 561.1 857.3 569.7 862.7 578.3 868.4 586.7 874.5 595.2 880.8 603.6 887.4 611.9 894.2 620.2 901.1 628.5 908.3 636.7 915.5 644.9 922.9 653.0 930.5 661.1M850.4 496.1 845.4 499.0 842.9 503.2 842.5 508.3 843.9 513.9 846.6 519.9 850.3 526.1 854.8 532.6 859.9 539.1 865.5 545.7 871.5 552.4 877.8 559.2 884.4 565.9 891.3 572.7 898.4 579.5 905.7 586.3 913.1 593.2 920.7 600.0 928.5 606.8 936.3 613.7 944.3 620.5M850.4 496.1 847.2 495.3 846.4 496.0 847.6 497.7 850.5 500.4 854.5 503.6 859.5 507.3 865.1 511.4 871.3 515.7 877.9 520.3 884.8 525.0 892.1 529.9 899.6 534.8 907.3 539.9 915.1 545.1 923.2 550.3 931.4 555.7 939.7 561.0 948.1 566.4 956.6 571.9 965.3 577.4M850.4 496.1 849.4 491.8 850.8 489.0 854.0 487.7 858.7 487.4 864.4 488.0 870.8 489.3 877.9 491.1 885.4 493.3 893.3 495.8 901.4 498.6 909.8 501.7 918.3 505.0 927.1 508.4 936.0 512.0 945.0 515.8 954.1 519.6 963.3 523.6 972.5 527.6 981.9 531.8 991.3 536.0M850.4 496.1 851.9 488.7 855.6 483.0 861.0 479.0 867.6 476.2 875.2 474.5 883.3 473.7 892.0 473.5 900.9 473.9 910.2 474.7 919.6 475.9 929.2 477.5 939.0 479.3 948.8 481.3 958.8 483.6 968.8 486.0 979.0 488.6 989.1 491.3 999.4 494.2 1009.6 497.2 1020.0 500.3M850.4 496.1 854.3 486.5 860.3 478.6 867.9 472.5 876.5 467.9 885.9 464.5 895.7 462.1 905.9 460.5 916.3 459.6 926.9 459.1 937.7 459.1 948.5 459.5 959.4 460.2 970.4 461.2 981.4 462.4 992.5 463.9 1003.6 465.6 1014.8 467.4 1025.9 469.4 1037.1 471.6 1048.3 473.8M850.4 496.1 856.5 485.2 864.6 476.2 874.1 469.0 884.5 463.3 895.4 459.0 906.8 455.8 918.3 453.4 930.1 451.6 941.9 450.5 953.8 449.8 965.7 449.6 977.7 449.7 989.7 450.1 1001.7 450.8 1013.7 451.7 1025.7 452.9 1037.7 454.2 1049.7 455.7 1061.7 457.4 1073.7 459.2M850.4 496.1 858.2 485.1 867.9 475.9 878.9 468.6 890.7 462.9 902.9 458.5 915.4 455.2 928.1 452.7 940.8 450.9 953.6 449.7 966.4 449.0 979.2 448.6 992.0 448.7 1004.8 449.1 1017.5 449.7 1030.2 450.6 1042.9 451.7 1055.6 453.0 1068.3 454.4 1080.9 456.1 1093.5 457.9M859.3 486.1 859.6 488.2 859.1 491.1 857.9 494.6 856.1 498.3 853.9 501.9 851.4 504.9 849.0 507.2 846.8 508.4 845.1 508.6 844.1 507.5 843.8 505.4 844.2 502.5 845.4 499.0 847.2 495.3 849.4 491.8 851.9 488.7 854.3 486.5 856.5 485.2 858.2 485.1ZM870.0 478.0 870.6 482.0 869.7 487.7 867.4 494.5 863.9 501.8 859.5 508.7 854.7 514.7 849.9 519.1 845.7 521.6 842.4 521.8 840.3 519.8 839.7 515.7 840.6 510.0 842.9 503.2 846.4 496.0 850.8 489.0 855.6 483.0 860.3 478.6 864.6 476.2 867.9 475.9ZM881.9 471.6 882.8 477.5 881.5 485.8 878.2 495.6 873.0 506.2 866.7 516.2 859.7 524.9 852.8 531.4 846.6 534.9 841.8 535.3 838.8 532.3 837.9 526.4 839.2 518.1 842.5 508.3 847.6 497.7 854.0 487.7 861.0 479.0 867.9 472.5 874.1 469.0 878.9 468.6ZM894.6 466.7 895.7 474.3 894.1 485.0 889.7 497.7 883.2 511.2 875.0 524.2 866.0 535.3 857.1 543.6 849.2 548.2 843.0 548.6 839.1 544.9 837.9 537.3 839.6 526.6 843.9 513.9 850.5 500.4 858.7 487.4 867.6 476.2 876.5 467.9 884.5 463.3 890.7 462.9ZM907.6 463.1 909.0 472.2 907.0 485.1 901.8 500.4 893.9 516.6 884.0 532.3 873.2 545.7 862.5 555.7 853.0 561.2 845.5 561.7 840.8 557.2 839.4 548.1 841.4 535.2 846.6 519.9 854.5 503.6 864.4 488.0 875.2 474.5 885.9 464.5 895.4 459.0 902.9 458.5ZM920.8 460.4 922.5 471.0 920.2 485.9 914.1 503.6 905.0 522.4 893.6 540.5 881.1 556.0 868.7 567.6 857.7 574.0 849.0 574.6 843.6 569.3 842.0 558.7 844.3 543.9 850.3 526.1 859.5 507.3 870.8 489.3 883.3 473.7 895.7 462.1 906.8 455.8 915.4 455.2ZM934.2 458.6 936.0 470.5 933.4 487.2 926.6 507.2 916.3 528.3 903.5 548.7 889.5 566.2 875.5 579.2 863.1 586.4 853.3 587.1 847.2 581.2 845.4 569.3 848.0 552.5 854.8 532.6 865.1 511.4 877.9 491.1 892.0 473.5 905.9 460.5 918.3 453.4 928.1 452.7ZM947.6 457.4 949.6 470.6 946.7 489.0 939.2 511.1 927.8 534.5 913.7 556.9 898.2 576.3 882.8 590.6 869.0 598.6 858.3 599.3 851.5 592.8 849.5 579.6 852.4 561.1 859.9 539.1 871.3 515.7 885.4 493.3 900.9 473.9 916.3 459.6 930.1 451.6 940.8 450.9ZM960.9 456.8 963.1 471.1 960.0 491.2 951.8 515.2 939.5 540.7 924.1 565.1 907.2 586.2 890.4 601.8 875.4 610.5 863.7 611.3 856.4 604.2 854.2 589.8 857.3 569.7 865.5 545.7 877.9 520.3 893.3 495.8 910.2 474.7 926.9 459.1 941.9 450.5 953.6 449.7ZM974.3 456.6 976.7 472.0 973.3 493.7 964.5 519.5 951.2 547.0 934.6 573.3 916.4 596.0 898.3 612.8 882.2 622.1 869.6 623.0 861.7 615.4 859.3 599.9 862.7 578.3 871.5 552.4 884.8 525.0 901.4 498.6 919.6 475.9 937.7 459.1 953.8 449.8 966.4 449.0ZM987.6 456.8 990.2 473.3 986.5 496.4 977.2 524.0 962.9 553.3 945.2 581.5 925.8 605.7 906.5 623.7 889.3 633.6 875.8 634.5 867.4 626.4 864.8 609.9 868.4 586.7 877.8 559.2 892.1 529.9 909.8 501.7 929.2 477.5 948.5 459.5 965.7 449.6 979.2 448.6ZM1000.9 457.4 1003.6 474.8 999.8 499.4 989.8 528.6 974.7 559.7 955.9 589.6 935.3 615.3 914.8 634.4 896.6 644.9 882.3 645.9 873.4 637.2 870.7 619.7 874.5 595.2 884.4 565.9 899.6 534.8 918.3 505.0 939.0 479.3 959.4 460.2 977.7 449.7 992.0 448.7ZM1014.2 458.2 1017.0 476.6 1013.0 502.5 1002.5 533.4 986.5 566.2 966.7 597.7 945.0 624.8 923.4 644.9 904.1 656.0 889.0 657.0 879.6 647.9 876.8 629.5 880.8 603.6 891.3 572.7 907.3 539.9 927.1 508.4 948.8 481.3 970.4 461.2 989.7 450.1 1004.8 449.1ZM1027.4 459.3 1030.4 478.6 1026.1 505.8 1015.1 538.2 998.4 572.6 977.6 605.7 954.7 634.2 932.1 655.3 911.8 667.0 896.0 668.0 886.1 658.4 883.2 639.1 887.4 611.9 898.4 579.5 915.1 545.1 936.0 512.0 958.8 483.6 981.4 462.4 1001.7 450.8 1017.5 449.7ZM1040.6 460.6 1043.7 480.8 1039.3 509.3 1027.7 543.2 1010.2 579.1 988.5 613.7 964.6 643.5 940.9 665.6 919.7 677.8 903.2 678.9 892.8 668.9 889.7 648.6 894.2 620.2 905.7 586.3 923.2 550.3 945.0 515.8 968.8 486.0 992.5 463.9 1013.7 451.7 1030.2 450.6ZM1053.7 462.1 1057.0 483.2 1052.3 512.9 1040.3 548.2 1022.1 585.7 999.4 621.7 974.5 652.7 949.8 675.7 927.8 688.5 910.5 689.7 899.8 679.2 896.5 658.1 901.1 628.5 913.1 593.2 931.4 555.7 954.1 519.6 979.0 488.6 1003.6 465.6 1025.7 452.9 1042.9 451.7ZM1066.8 463.8 1070.2 485.7 1065.4 516.6 1052.9 553.2 1034.0 592.2 1010.4 629.7 984.5 661.9 958.9 685.8 936.0 699.0 918.0 700.3 906.8 689.4 903.5 667.5 908.3 636.7 920.7 600.0 939.7 561.0 963.3 523.6 989.1 491.3 1014.8 467.4 1037.7 454.2 1055.6 453.0ZM1079.9 465.7 1083.4 488.4 1078.4 520.3 1065.5 558.4 1045.8 598.8 1021.4 637.6 994.6 671.0 968.0 695.8 944.2 709.5 925.7 710.8 914.0 699.5 910.6 676.8 915.5 644.9 928.5 606.8 948.1 566.4 972.5 527.6 999.4 494.2 1025.9 469.4 1049.7 455.7 1068.3 454.4ZM1092.9 467.7 1096.5 491.2 1091.4 524.2 1078.0 563.6 1057.7 605.3 1032.4 645.5 1004.7 680.1 977.2 705.7 952.6 719.9 933.4 721.2 921.4 709.5 917.8 686.0 922.9 653.0 936.3 613.7 956.6 571.9 981.9 531.8 1009.6 497.2 1037.1 471.6 1061.7 457.4 1080.9 456.1ZM1105.9 469.9 1109.6 494.1 1104.3 528.2 1090.5 568.8 1069.6 611.9 1043.5 653.4 1014.8 689.0 986.5 715.5 961.1 730.1 941.3 731.5 928.9 719.5 925.2 695.2 930.5 661.1 944.3 620.5 965.3 577.4 991.3 536.0 1020.0 500.3 1048.3 473.8 1073.7 459.2 1093.5 457.9Z" stroke="#0000ff" stroke-width="1.15" fill="none" stroke-linejoin="miter"/><path d="M1371.6 507 L1371.6 548 M1371.6 555 L1371.6 573.6" stroke="#6a9bd8" stroke-width="1.2"/><path d="M1350.2 573.6 L1368 555.5 M1375 547.5 L1414.7 506.2" stroke="#8cc84b" stroke-width="1.2"/><path d="M1343.2 535.3 L1368 549.5 M1375.5 553.5 L1429 584.7" stroke="#e07f5f" stroke-width="1.2"/><rect x="1368.3" y="548" width="6.6" height="6.6" fill="none" stroke="#f4f4f4" stroke-width="1.2"/><g stroke="#e2e2e2" stroke-width="1.3" fill="none"><path d="M24.4 858.3 L24.4 893"/><path d="M26.8 893 L61.5 857.3"/><path d="M28 899 L74.7 926.6"/><path d="M18.4 897.5 L24.4 891 L32.7 896.7 L26.3 902.6 Z"/><path d="M29 842.5 L44 842.5 L29 856.8 L44 856.8"/><path d="M63 838 L70.4 845.5 L77.8 838 M70.4 845.5 L70.4 852.7"/><path d="M79 910.2 L93.9 924.7 M93.9 910.2 L79 924.7"/></g><rect x="1837" y="245" width="13" height="4" fill="#e6e6e6"/><rect x="1865" y="237.5" width="9.5" height="9" fill="none" stroke="#e6e6e6" stroke-width="1.6"/><rect x="1862.5" y="241" width="9" height="9" fill="#000" stroke="#e6e6e6" stroke-width="2"/><path d="M1887 238 L1899 249 M1899 238 L1887 249" stroke="#e6e6e6" stroke-width="2.4"/><defs><radialGradient id="sh" cx="0.5" cy="0.5" r="0.5"><stop offset="0.5" stop-color="#000" stop-opacity="0.9"/><stop offset="1" stop-color="#000" stop-opacity="0"/></radialGradient><linearGradient id="fg" x1="0" y1="0" x2="0" y2="1"><stop offset="0" stop-color="#a9a9a9"/><stop offset="1" stop-color="#959595"/></linearGradient></defs><ellipse cx="1829.1" cy="360.8" rx="54.7" ry="42.6" fill="none" stroke="#2f2f2f" stroke-width="14"/><g font-family="Liberation Sans" font-weight="bold" fill="#8a8a8a" text-anchor="middle"><text x="1784.5" y="332.5" font-size="20" transform="rotate(-36 1784.5 326)">W</text><text x="1790.5" y="401.5" font-size="20" transform="rotate(22 1790.5 395)">S</text><text x="1877.7" y="391" font-size="20" transform="rotate(-32 1877.7 384)">E</text><text x="1862" y="322" font-size="12" transform="rotate(-40 1862 318)">N</text></g><filter id="bl" x="-50%" y="-50%" width="200%" height="200%"><feGaussianBlur stdDeviation="6"/></filter><polygon points="1824.6,302 1870,322 1868,356 1834,390 1789,362 1787,328" fill="#000" filter="url(#bl)"/><polygon points="1824.6,302 1870,322 1868,356 1834,390 1789,362 1787,328" fill="#000" filter="url(#bl)"/><g opacity="0.93"><polygon points="1824.6,296.3 1863.3,317.4 1833.9,348.7 1794.2,325.2" fill="#a6a6a6"/><polygon points="1794.2,325.2 1833.9,348.7 1833.4,378.1 1796.2,353.6" fill="url(#fg)"/><polygon points="1833.9,348.7 1863.3,317.4 1860.9,347.7 1833.4,378.1" fill="#9b9b9b"/><path d="M1794.2 325.2 L1833.9 348.7 L1863.3 317.4 M1833.9 348.7 L1833.4 378.1" stroke="#5a5a5a" stroke-width="0.9" stroke-dasharray="3 3" fill="none"/><polygon points="1829,344 1835.5,338.5 1840.5,344.5 1834,350" fill="#8f9598"/><g font-family="Liberation Sans" font-weight="bold" fill="#4e535c" text-anchor="middle"><text x="1829.5" y="324.5" font-size="10.5" transform="rotate(27 1829.5 320.8)">TOP</text><text x="1814.8" y="355" font-size="9.5" transform="rotate(31 1814.8 351.7)">FRONT</text><text x="1848.6" y="351" font-size="9.5" transform="rotate(-52 1848.6 347.7)">RIGHT</text></g></g><path d="M1796 354.9 L1861.5 369.9" stroke="#ff7070" stroke-width="1.2" opacity="0.55"/><rect x="1800" y="425.4" width="55.3" height="20.4" rx="5" fill="#8d8f98"/><text x="1818.8" y="440.2" font-family="Liberation Sans" font-size="12.2" fill="#5a5c63" text-anchor="middle" textLength="29" lengthAdjust="spacingAndGlyphs">WCS</text><polygon points="1841,432.5 1851,432.5 1846,438" fill="#a9abb2" stroke="#7f818a" stroke-width="0.8"/><rect x="1868.8" y="477" width="40.2" height="259" rx="4" fill="#333333"/><circle cx="1901.8" cy="483.5" r="4" fill="none" stroke="#4e4e4e" stroke-width="1"/><circle cx="1901.8" cy="727.6" r="4" fill="none" stroke="#4e4e4e" stroke-width="1"/><circle cx="1888.5" cy="512" r="12.5" fill="none" stroke="#4e4e4e" stroke-width="1.6"/><circle cx="1888.5" cy="511" r="6.5" fill="none" stroke="#4e4e4e" stroke-width="1.6"/><polygon points="1885.5,536.5 1891.5,536.5 1888.5,539" fill="#4e4e4e"/><path d="M1871.5 545.5 L1906 545.5 M1871.5 679 L1906 679" stroke="#444" stroke-width="1"/><path d="M1878 566 Q1880 576 1886 579 L1896 579 Q1900 572 1901 562 M1883 572 L1883 557 M1888 569 L1888 553 M1893 569 L1893 554 M1898 570 L1898 560" stroke="#4e4e4e" stroke-width="1.5" fill="none"/><path d="M1874 588 L1888 602 M1888 588 L1874 602" stroke="#4e4e4e" stroke-width="1.4"/><circle cx="1893.5" cy="605" r="5" fill="none" stroke="#4e4e4e" stroke-width="1.6"/><path d="M1897 608.5 L1901 612.5" stroke="#4e4e4e" stroke-width="2"/><polygon points="1885.5,622 1891.5,622 1888.5,624.5" fill="#4e4e4e"/><path d="M1888 631 L1888 662 M1884.5 635 L1888 630 L1891.5 635" stroke="#4e4e4e" stroke-width="1.6" fill="none"/><ellipse cx="1888" cy="648" rx="12" ry="4" fill="none" stroke="#4e4e4e" stroke-width="1.5"/><polygon points="1885.5,669 1891.5,669 1888.5,671.5" fill="#4e4e4e"/><rect x="1875" y="684.5" width="7" height="7" fill="none" stroke="#4e4e4e" stroke-width="1.2"/><rect x="1884.5" y="684.5" width="7" height="7" fill="none" stroke="#4e4e4e" stroke-width="1.2"/><rect x="1894" y="684.5" width="7" height="7" fill="none" stroke="#4e4e4e" stroke-width="1.2"/><rect x="1875" y="696" width="20" height="15" fill="none" stroke="#4e4e4e" stroke-width="1.4"/><polygon points="1881,699 1881,708 1888,703.5" fill="#4e4e4e"/><rect x="499.3" y="833.3" width="454.1" height="18.4" rx="2" fill="#121212"/><rect x="499.3" y="858.3" width="220" height="18.4" rx="2" fill="#121212"/><rect x="499.3" y="883.4" width="391.2" height="18.4" rx="2" fill="#121212"/></svg>
<div style="position:absolute;left:501.50px;top:836.50px;font:normal normal 15px/15px 'Liberation Mono', monospace;color:#3b3b3b;white-space:pre;">Select object that defines the axis of revolution:</div>
<div style="position:absolute;left:501.50px;top:861.50px;font:normal normal 15px/15px 'Liberation Mono', monospace;color:#3b3b3b;white-space:pre;">Specify start angle &lt;0&gt;:</div>
<div style="position:absolute;left:501.50px;top:886.60px;font:normal normal 15px/15px 'Liberation Mono', monospace;color:#3b3b3b;white-space:pre;">Specify included angle (+=ccw, -=cw) &lt;360&gt;:</div>
<div style="position:absolute;left:420.3px;top:907.3px;width:75px;height:33px;background:#222933;border-radius:3px 0 0 3px"></div>
<div style="position:absolute;left:492px;top:908px;width:1002px;height:32px;background:#b4b4b4;border-radius:0 3px 3px 3px"></div>
<svg style="position:absolute;left:0px;top:0px;" width="1916" height="1020" viewBox="0 0 1916 1020"><rect x="424.8" y="913.5" width="2" height="2" fill="#d6d6d6"/><rect x="428.8" y="913.5" width="2" height="2" fill="#d6d6d6"/><rect x="424.8" y="917.1" width="2" height="2" fill="#d6d6d6"/><rect x="428.8" y="917.1" width="2" height="2" fill="#d6d6d6"/><rect x="424.8" y="920.7" width="2" height="2" fill="#d6d6d6"/><rect x="428.8" y="920.7" width="2" height="2" fill="#d6d6d6"/><rect x="424.8" y="924.3" width="2" height="2" fill="#d6d6d6"/><rect x="428.8" y="924.3" width="2" height="2" fill="#d6d6d6"/><rect x="424.8" y="927.9" width="2" height="2" fill="#d6d6d6"/><rect x="428.8" y="927.9" width="2" height="2" fill="#d6d6d6"/><rect x="424.8" y="931.5" width="2" height="2" fill="#d6d6d6"/><rect x="428.8" y="931.5" width="2" height="2" fill="#d6d6d6"/><path d="M440 917 L450 927 M450 917 L440 927" stroke="#d8d8d8" stroke-width="1.7"/><path d="M468.5 930.5 L478.5 920.5" stroke="#a4a4a4" stroke-width="3" stroke-linecap="round"/><path d="M486.4 916.2 A4.5 4.5 0 1 1 482.8 912.6" stroke="#a4a4a4" stroke-width="2.8" fill="none"/><rect x="497.5" y="916.5" width="19" height="14.5" fill="#b4b4b4" stroke="#3c3c3c" stroke-width="1.1"/><rect x="497.5" y="916.5" width="19" height="3.2" fill="#3c3c3c"/><path d="M500 922 L503 924.5 L500 927 M503.5 928 L508 928" stroke="#3c3c3c" stroke-width="0.9" fill="none"/><polygon points="519.2,922 528.8,922 524,927" fill="#333"/><polygon points="1479,926.7 1488.5,926.7 1483.75,922" fill="#333"/></svg>
<div style="position:absolute;left:538.01px;top:917.20px;font:italic normal 15px/15px 'Liberation Mono', monospace;color:#555555;white-space:pre;transform:scaleX(0.9870);transform-origin:0 0;">Type a command</div>
</body></html>
